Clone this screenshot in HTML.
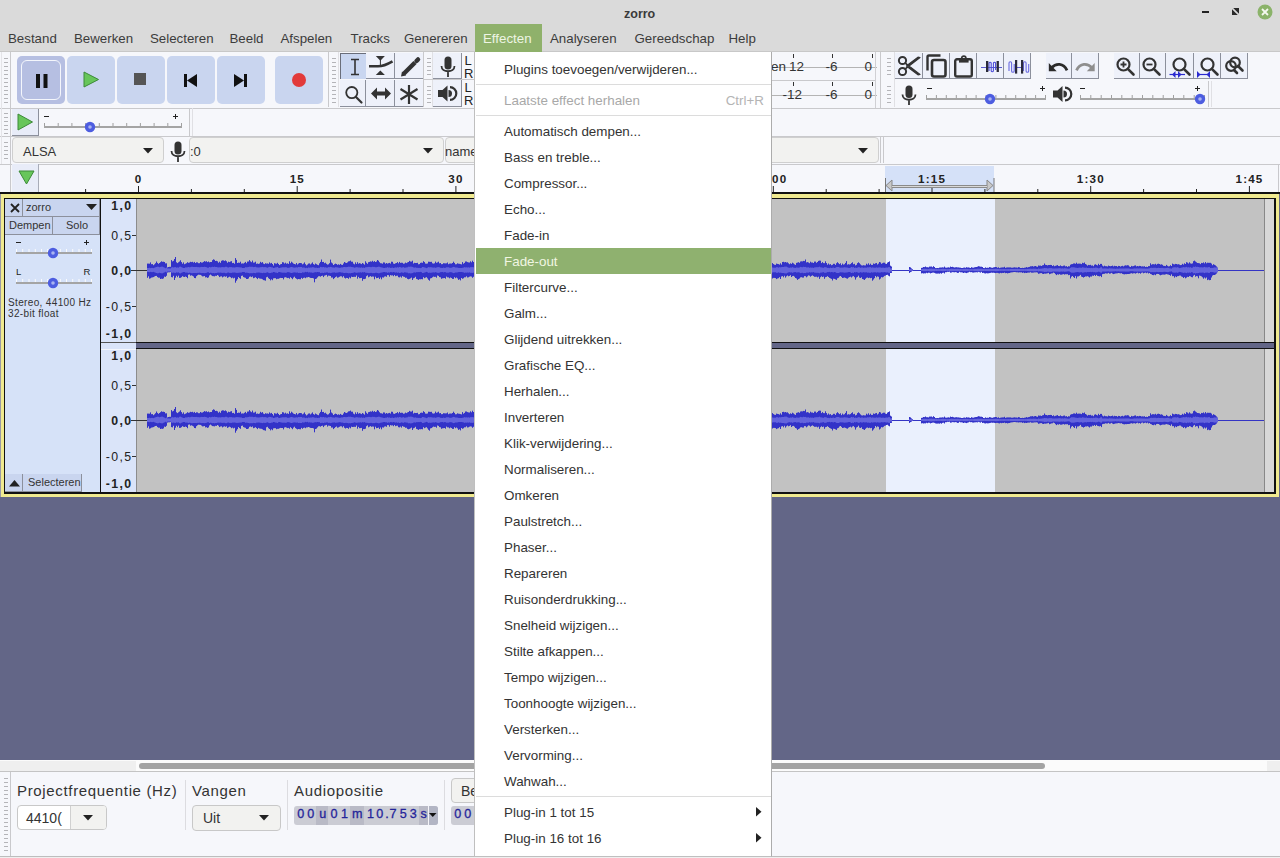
<!DOCTYPE html><html><head><meta charset="utf-8"><style>
*{margin:0;padding:0;box-sizing:border-box}
html,body{width:1280px;height:858px;overflow:hidden;background:#f6f7fb;font-family:"Liberation Sans",sans-serif;color:#3c3c3c}
.a{position:absolute}
.t{position:absolute;white-space:nowrap;line-height:1}
svg{position:absolute;overflow:visible}
</style></head><body><div class="a" style="left:0px;top:0px;width:1280px;height:52px;background:#dadada"></div>
<div class="a" style="left:0px;top:51px;width:1280px;height:1px;background:#c8c8c8"></div>
<div class="t" style="left:624px;top:8px;font-size:12.5px;font-weight:bold;color:#3a3a3a">zorro</div>
<div class="a" style="left:1202px;top:11px;width:7px;height:2px;background:#222"></div>
<svg style="left:1232px;top:8px" width="8" height="8"><path d="M1.2 0 H7 V5.8Z M0 1.2 V7 H5.8Z" fill="#2a2a2a"/></svg>
<svg style="left:1256px;top:3px" width="18" height="18"><circle cx="9" cy="9" r="7.5" fill="#8bb36a"/><path d="M6 6 L12 12 M12 6 L6 12" stroke="#f4f8ee" stroke-width="1.8"/></svg>
<div class="a" style="left:475px;top:24px;width:67px;height:28px;background:#8fb16b"></div>
<div class="t" style="left:8px;top:32px;font-size:13.3px;color:#3c3c3c">Bestand</div>
<div class="t" style="left:74px;top:32px;font-size:13.3px;color:#3c3c3c">Bewerken</div>
<div class="t" style="left:150px;top:32px;font-size:13.3px;color:#3c3c3c">Selecteren</div>
<div class="t" style="left:229.5px;top:32px;font-size:13.3px;color:#3c3c3c">Beeld</div>
<div class="t" style="left:280.5px;top:32px;font-size:13.3px;color:#3c3c3c">Afspelen</div>
<div class="t" style="left:350.5px;top:32px;font-size:13.3px;color:#3c3c3c">Tracks</div>
<div class="t" style="left:404px;top:32px;font-size:13.3px;color:#3c3c3c">Genereren</div>
<div class="t" style="left:483px;top:32px;font-size:13.3px;color:#eef5e4">Effecten</div>
<div class="t" style="left:550px;top:32px;font-size:13.3px;color:#3c3c3c">Analyseren</div>
<div class="t" style="left:634.5px;top:32px;font-size:13.3px;color:#3c3c3c">Gereedschap</div>
<div class="t" style="left:728.5px;top:32px;font-size:13.3px;color:#3c3c3c">Help</div>
<div class="a" style="left:0px;top:52px;width:1280px;height:141px;background:#f6f7fb"></div>
<div class="a" style="left:0px;top:108px;width:1280px;height:1px;background:#c9c9cc"></div>
<div class="a" style="left:0px;top:136px;width:1280px;height:1px;background:#c9c9cc"></div>
<div class="a" style="left:0px;top:164px;width:1280px;height:1px;background:#c9c9cc"></div>
<svg style="left:3px;top:53px" width="7" height="54"><rect x="1" y="5" width="4" height="1" fill="#b4b4b8"/><rect x="1" y="9" width="4" height="1" fill="#b4b4b8"/><rect x="1" y="13" width="4" height="1" fill="#b4b4b8"/><rect x="1" y="17" width="4" height="1" fill="#b4b4b8"/><rect x="1" y="21" width="4" height="1" fill="#b4b4b8"/><rect x="1" y="25" width="4" height="1" fill="#b4b4b8"/><rect x="1" y="29" width="4" height="1" fill="#b4b4b8"/><rect x="1" y="33" width="4" height="1" fill="#b4b4b8"/><rect x="1" y="37" width="4" height="1" fill="#b4b4b8"/><rect x="1" y="41" width="4" height="1" fill="#b4b4b8"/><rect x="1" y="45" width="4" height="1" fill="#b4b4b8"/><rect x="1" y="49" width="4" height="1" fill="#b4b4b8"/></svg>
<svg style="left:3px;top:108px" width="7" height="28"><rect x="1" y="5" width="4" height="1" fill="#b4b4b8"/><rect x="1" y="9" width="4" height="1" fill="#b4b4b8"/><rect x="1" y="13" width="4" height="1" fill="#b4b4b8"/><rect x="1" y="17" width="4" height="1" fill="#b4b4b8"/><rect x="1" y="21" width="4" height="1" fill="#b4b4b8"/><rect x="1" y="25" width="4" height="1" fill="#b4b4b8"/></svg>
<svg style="left:3px;top:137px" width="7" height="26"><rect x="1" y="5" width="4" height="1" fill="#b4b4b8"/><rect x="1" y="9" width="4" height="1" fill="#b4b4b8"/><rect x="1" y="13" width="4" height="1" fill="#b4b4b8"/><rect x="1" y="17" width="4" height="1" fill="#b4b4b8"/><rect x="1" y="21" width="4" height="1" fill="#b4b4b8"/></svg>
<div class="a" style="left:10px;top:52px;width:1px;height:141px;background:#c9c9cc"></div>
<div class="a" style="left:1px;top:52px;width:1px;height:112px;background:#e4e4e8"></div>
<div class="a" style="left:17px;top:56px;width:48px;height:48px;background:#b6bfe2;border-radius:5px"></div>
<div class="a" style="left:21px;top:60px;width:40px;height:40px;border:1.5px solid #f4f6fc;border-radius:6px"></div>
<svg style="left:36px;top:74px" width="12" height="14"><rect x="0" y="0" width="4" height="14" fill="#111"/><rect x="7.5" y="0" width="4" height="14" fill="#111"/></svg>
<div class="a" style="left:67px;top:56px;width:48px;height:48px;background:#c9d5ef;border-radius:5px"></div>
<svg style="left:83px;top:71px" width="17" height="17"><path d="M1 1 L15.5 8.5 L1 16Z" fill="#67c65a" stroke="#3c8a38" stroke-width="1"/></svg>
<div class="a" style="left:117px;top:56px;width:48px;height:48px;background:#c9d5ef;border-radius:5px"></div>
<div class="a" style="left:134px;top:73px;width:12px;height:12px;background:#555;"></div>
<div class="a" style="left:167px;top:56px;width:48px;height:48px;background:#c9d5ef;border-radius:5px"></div>
<svg style="left:184px;top:74px" width="14" height="14"><rect x="0" y="0" width="3" height="13" fill="#111"/><path d="M3 6.5 L13 0 L13 13Z" fill="#111"/></svg>
<div class="a" style="left:217px;top:56px;width:48px;height:48px;background:#c9d5ef;border-radius:5px"></div>
<svg style="left:234px;top:74px" width="14" height="14"><path d="M0 0 L10 6.5 L0 13Z" fill="#111"/><rect x="10" y="0" width="3" height="13" fill="#111"/></svg>
<div class="a" style="left:275px;top:56px;width:48px;height:48px;background:#c9d5ef;border-radius:5px"></div>
<svg style="left:291px;top:72px" width="16" height="16"><circle cx="8" cy="8" r="7" fill="#e23a3a"/></svg>
<div class="a" style="left:328px;top:52px;width:1px;height:55px;background:#c9c9cc"></div>
<svg style="left:331px;top:53px" width="7" height="54"><rect x="1" y="5" width="4" height="1" fill="#b4b4b8"/><rect x="1" y="9" width="4" height="1" fill="#b4b4b8"/><rect x="1" y="13" width="4" height="1" fill="#b4b4b8"/><rect x="1" y="17" width="4" height="1" fill="#b4b4b8"/><rect x="1" y="21" width="4" height="1" fill="#b4b4b8"/><rect x="1" y="25" width="4" height="1" fill="#b4b4b8"/><rect x="1" y="29" width="4" height="1" fill="#b4b4b8"/><rect x="1" y="33" width="4" height="1" fill="#b4b4b8"/><rect x="1" y="37" width="4" height="1" fill="#b4b4b8"/><rect x="1" y="41" width="4" height="1" fill="#b4b4b8"/><rect x="1" y="45" width="4" height="1" fill="#b4b4b8"/><rect x="1" y="49" width="4" height="1" fill="#b4b4b8"/></svg>
<div class="a" style="left:338px;top:52px;width:1px;height:55px;background:#e0e0e4"></div>
<div class="a" style="left:340px;top:53px;width:26px;height:26px;background:#c9d6f0;border-top:1px solid #6a6e7a;border-left:1px solid #6a6e7a"></div>
<svg style="left:350px;top:58px" width="10" height="18"><path d="M1 1.5H9 M5 1.5V16.5 M1 16.5H9" stroke="#333" stroke-width="1.6" fill="none"/></svg>
<div class="a" style="left:366px;top:53px;width:29px;height:26px;background:#eef1fa;border-right:1px solid #8c909c;border-bottom:1px solid #8c909c"></div>
<svg style="left:368px;top:55px" width="26" height="22"><path d="M7.8 1 H16.9 L12.35 5.8Z M7.8 20 H16.9 L12.35 15.4Z" fill="#333"/><path d="M12.4 5 V10" stroke="#333" stroke-width="1"/><path d="M1 11.3 H10 C15 11.3 19 9.5 24.5 6.3" stroke="#333" stroke-width="2.6" fill="none"/></svg>
<div class="a" style="left:395px;top:53px;width:29px;height:26px;background:#eef1fa;border-right:1px solid #8c909c;border-bottom:1px solid #8c909c"></div>
<svg style="left:399px;top:57px" width="22" height="20"><path d="M4.5 17 L16 5.5" stroke="#333" stroke-width="4.5"/><path d="M17.5 4 L19 2.5" stroke="#333" stroke-width="4.5" stroke-linecap="round"/><path d="M2 19.5 L3 14.5 L7 18.5Z" fill="#333"/></svg>
<div class="a" style="left:340px;top:80px;width:26px;height:27px;background:#eef1fa;border-right:1px solid #8c909c;border-bottom:1px solid #8c909c"></div>
<svg style="left:344px;top:85px" width="22" height="20"><circle cx="7.8" cy="7.6" r="5.6" stroke="#333" stroke-width="1.8" fill="none"/><path d="M12 12 L17.5 17.5" stroke="#333" stroke-width="2.2" stroke-linecap="round"/></svg>
<div class="a" style="left:366px;top:80px;width:29px;height:27px;background:#eef1fa;border-right:1px solid #8c909c;border-bottom:1px solid #8c909c"></div>
<svg style="left:370px;top:86px" width="22" height="16"><path d="M1 7.5 L7 1.5 V5.5 H15 V1.5 L21 7.5 L15 13.5 V9.5 H7 V13.5Z" fill="#333"/></svg>
<div class="a" style="left:395px;top:80px;width:29px;height:27px;background:#eef1fa;border-right:1px solid #8c909c;border-bottom:1px solid #8c909c"></div>
<svg style="left:399px;top:84px" width="21" height="21"><path d="M10 1V20 M1.5 5 L18.5 15.5 M1.5 15.5 L18.5 5" stroke="#333" stroke-width="2.2"/></svg>
<div class="a" style="left:423px;top:52px;width:1px;height:55px;background:#c9c9cc"></div>
<svg style="left:426px;top:53px" width="7" height="26"><rect x="1" y="5" width="4" height="1" fill="#b4b4b8"/><rect x="1" y="9" width="4" height="1" fill="#b4b4b8"/><rect x="1" y="13" width="4" height="1" fill="#b4b4b8"/><rect x="1" y="17" width="4" height="1" fill="#b4b4b8"/><rect x="1" y="21" width="4" height="1" fill="#b4b4b8"/></svg>
<svg style="left:426px;top:81px" width="7" height="26"><rect x="1" y="5" width="4" height="1" fill="#b4b4b8"/><rect x="1" y="9" width="4" height="1" fill="#b4b4b8"/><rect x="1" y="13" width="4" height="1" fill="#b4b4b8"/><rect x="1" y="17" width="4" height="1" fill="#b4b4b8"/><rect x="1" y="21" width="4" height="1" fill="#b4b4b8"/></svg>
<div class="a" style="left:432px;top:52px;width:1px;height:55px;background:#e0e0e4"></div>
<div class="a" style="left:424px;top:79px;width:52px;height:1px;background:#c9c9cc"></div>
<div class="a" style="left:433px;top:53px;width:29px;height:26px;background:#eef1fa;border-right:1px solid #8c909c;border-bottom:1px solid #8c909c"></div>
<svg style="left:440px;top:56px" width="16" height="22"><rect x="4.5" y="0.5" width="7" height="13" rx="3.5" fill="#333"/><path d="M1.5 10 C1.5 17 14.5 17 14.5 10 M8 15.5 V21" stroke="#333" stroke-width="1.8" fill="none"/></svg>
<div class="a" style="left:433px;top:80px;width:29px;height:27px;background:#eef1fa;border-right:1px solid #8c909c;border-bottom:1px solid #8c909c"></div>
<svg style="left:437px;top:84px" width="20" height="20"><path d="M1 6 H5.5 L10.5 1.5 V17.5 L5.5 13 H1Z" fill="#333"/><path d="M11.5 6 A3.5 3.5 0 0 1 11.5 13Z" fill="#333"/><path d="M13 3.2 A6.3 6.3 0 0 1 13 15.8" stroke="#333" stroke-width="2.2" fill="none"/></svg>
<div class="t" style="left:464.5px;top:53.5px;font-size:13px;color:#222">L</div>
<div class="t" style="left:464px;top:67px;font-size:13px;color:#222">R</div>
<div class="t" style="left:464.5px;top:80.5px;font-size:13px;color:#222">L</div>
<div class="t" style="left:464px;top:94px;font-size:13px;color:#222">R</div>
<div class="a" style="left:771px;top:67px;width:106px;height:1px;background:#b4b4b4"></div>
<div class="a" style="left:771px;top:95px;width:106px;height:1px;background:#b4b4b4"></div>
<div class="a" style="left:771px;top:80px;width:105px;height:1px;background:#c9c9cc"></div>
<div class="t" style="left:771px;top:60px;font-size:13.5px;color:#333">en</div>
<div class="t" style="left:789px;top:60px;font-size:13.5px;color:#333">12</div>
<div class="t" style="left:825.5px;top:60px;font-size:13.5px;color:#333">-6</div>
<div class="t" style="left:864.5px;top:60px;font-size:13.5px;color:#333">0</div>
<div class="t" style="left:782.5px;top:88px;font-size:13.5px;color:#333">-12</div>
<div class="t" style="left:825.5px;top:88px;font-size:13.5px;color:#333">-6</div>
<div class="t" style="left:864.5px;top:88px;font-size:13.5px;color:#333">0</div>
<div class="a" style="left:793px;top:54px;width:1px;height:4px;background:#333"></div>
<div class="a" style="left:793px;top:82px;width:1px;height:4px;background:#333"></div>
<div class="a" style="left:832px;top:54px;width:1px;height:4px;background:#333"></div>
<div class="a" style="left:832px;top:82px;width:1px;height:4px;background:#333"></div>
<div class="a" style="left:872px;top:54px;width:1px;height:4px;background:#333"></div>
<div class="a" style="left:872px;top:82px;width:1px;height:4px;background:#333"></div>
<div class="a" style="left:875px;top:52px;width:1px;height:56px;background:#d0d0d4"></div>
<div class="a" style="left:880px;top:52px;width:1px;height:56px;background:#c9c9cc"></div>
<svg style="left:886px;top:53px" width="7" height="26"><rect x="1" y="5" width="4" height="1" fill="#b4b4b8"/><rect x="1" y="9" width="4" height="1" fill="#b4b4b8"/><rect x="1" y="13" width="4" height="1" fill="#b4b4b8"/><rect x="1" y="17" width="4" height="1" fill="#b4b4b8"/><rect x="1" y="21" width="4" height="1" fill="#b4b4b8"/></svg>
<svg style="left:886px;top:81px" width="7" height="26"><rect x="1" y="5" width="4" height="1" fill="#b4b4b8"/><rect x="1" y="9" width="4" height="1" fill="#b4b4b8"/><rect x="1" y="13" width="4" height="1" fill="#b4b4b8"/><rect x="1" y="17" width="4" height="1" fill="#b4b4b8"/><rect x="1" y="21" width="4" height="1" fill="#b4b4b8"/></svg>
<div class="a" style="left:894px;top:52px;width:1px;height:55px;background:#e0e0e4"></div>
<div class="a" style="left:895px;top:53px;width:28px;height:26px;background:#eef1fa;border-right:1px solid #8c909c;border-bottom:1px solid #8c909c"></div>
<div class="a" style="left:923px;top:53px;width:27px;height:26px;background:#eef1fa;border-right:1px solid #8c909c;border-bottom:1px solid #8c909c"></div>
<div class="a" style="left:950px;top:53px;width:27px;height:26px;background:#eef1fa;border-right:1px solid #8c909c;border-bottom:1px solid #8c909c"></div>
<div class="a" style="left:977px;top:53px;width:27px;height:26px;background:#eef1fa;border-right:1px solid #8c909c;border-bottom:1px solid #8c909c"></div>
<div class="a" style="left:1004px;top:53px;width:27px;height:26px;background:#eef1fa;border-right:1px solid #8c909c;border-bottom:1px solid #8c909c"></div>
<div class="a" style="left:1046px;top:53px;width:26px;height:26px;background:#eef1fa;border-right:1px solid #8c909c;border-bottom:1px solid #8c909c"></div>
<div class="a" style="left:1072px;top:53px;width:27px;height:26px;background:#eef1fa;border-right:1px solid #8c909c;border-bottom:1px solid #8c909c"></div>
<div class="a" style="left:1114px;top:53px;width:26px;height:26px;background:#eef1fa;border-right:1px solid #8c909c;border-bottom:1px solid #8c909c"></div>
<div class="a" style="left:1140px;top:53px;width:26px;height:26px;background:#eef1fa;border-right:1px solid #8c909c;border-bottom:1px solid #8c909c"></div>
<div class="a" style="left:1166px;top:53px;width:28px;height:26px;background:#eef1fa;border-right:1px solid #8c909c;border-bottom:1px solid #8c909c"></div>
<div class="a" style="left:1194px;top:53px;width:27px;height:26px;background:#eef1fa;border-right:1px solid #8c909c;border-bottom:1px solid #8c909c"></div>
<div class="a" style="left:1221px;top:53px;width:27px;height:26px;background:#eef1fa;border-right:1px solid #8c909c;border-bottom:1px solid #8c909c"></div>
<svg style="left:897px;top:55px" width="24" height="22"><circle cx="5.5" cy="5.5" r="3.6" stroke="#333" stroke-width="2" fill="none"/><circle cx="5.5" cy="16.5" r="3.6" stroke="#333" stroke-width="2" fill="none"/><path d="M8.2 7.8 L12 11 L23 19.5 L21 19.8 L11 12.2Z M8.2 14.2 L12 11 L23 2.5 L21 2.2 L11 9.8Z" fill="#333" stroke="#333" stroke-width="1.2" stroke-linejoin="round"/></svg>
<svg style="left:925px;top:54px" width="24" height="24"><path d="M2.5 16.5 V3 a1.5 1.5 0 0 1 1.5 -1.5 H15.5" stroke="#333" stroke-width="2.4" fill="none"/><rect x="7" y="6" width="13.5" height="16.5" rx="2" stroke="#333" stroke-width="2.6" fill="none"/></svg>
<svg style="left:953px;top:55px" width="22" height="24"><rect x="2.2" y="4.2" width="16.6" height="17.3" rx="1.8" stroke="#333" stroke-width="2.4" fill="none"/><path d="M6 4.3 H15.6 V7.6 H6Z" fill="#333"/><circle cx="10.8" cy="3.2" r="2.1" stroke="#333" stroke-width="1.7" fill="none"/></svg>
<svg style="left:980px;top:59px" width="24" height="15"><path d="M1 8.5H22" stroke="#5a5ad0" stroke-width="1"/><path d="M9 12 V4 A1.2 1.2 0 0 1 11.2 4 V12 A1.2 1.2 0 0 0 13.4 12 V4 A1.2 1.2 0 0 1 15.6 4 V11" stroke="#4d4dd8" stroke-width="1.1" fill="none"/><rect x="6" y="2" width="2.3" height="11" fill="#2a2a3a"/><rect x="16.6" y="2" width="2.3" height="11" fill="#2a2a3a"/></svg>
<svg style="left:1006px;top:58px" width="26" height="18"><path d="M10 9.5H16" stroke="#5a5ad0" stroke-width="1"/><path d="M3 13 V5 A1.3 1.3 0 0 1 5.6 5 V13 A1.3 1.3 0 0 0 8.2 13 V6" stroke="#6a6ae0" stroke-width="1.1" fill="none"/><path d="M17.5 13 V5 A1.3 1.3 0 0 1 20.1 5 V13 A1.3 1.3 0 0 0 22.7 13 V6" stroke="#6a6ae0" stroke-width="1.1" fill="none"/><rect x="9" y="2" width="2.2" height="13.6" fill="#2a2a3a"/><rect x="15" y="2" width="2.2" height="13.6" fill="#2a2a3a"/></svg>
<svg style="left:1046px;top:60px" width="24" height="14"><path d="M2.8 2.9 V11.2 H10.7Z" fill="#2a2a2a"/><path d="M5.5 7.8 C10 3 17.5 2.8 21 10.4" stroke="#2a2a2a" stroke-width="2.8" fill="none"/></svg>
<svg style="left:1072px;top:60px" width="24" height="14"><path d="M22.7 2.9 V11.2 H14.8Z" fill="#8e8e8e"/><path d="M20 7.8 C15.5 3 8 2.8 4.5 10.4" stroke="#8e8e8e" stroke-width="2.8" fill="none"/></svg>
<svg style="left:1115px;top:56px" width="22" height="22"><circle cx="8.5" cy="8.5" r="6" stroke="#333" stroke-width="2.2" fill="none"/><path d="M12.8 12.8 L18.5 18.5" stroke="#333" stroke-width="2.6" stroke-linecap="round"/><path d="M5.5 8.5H11.5 M8.5 5.5V11.5" stroke="#333" stroke-width="1.8"/></svg>
<svg style="left:1141px;top:56px" width="22" height="22"><circle cx="8.5" cy="8.5" r="6" stroke="#333" stroke-width="2.2" fill="none"/><path d="M12.8 12.8 L18.5 18.5" stroke="#333" stroke-width="2.6" stroke-linecap="round"/><path d="M5.5 8.5H11.5" stroke="#333" stroke-width="1.8"/></svg>
<svg style="left:1171px;top:56px" width="22" height="22"><circle cx="8.5" cy="8.5" r="6" stroke="#333" stroke-width="2.2" fill="none"/><path d="M12.8 12.8 L18.5 18.5" stroke="#333" stroke-width="2.6" stroke-linecap="round"/><path d="M-1.5 18.5 H14" stroke="#2a2ad0" stroke-width="1.2"/><path d="M1 18.5 L4.5 15 V22Z M10.5 18.5 L7 15 V22Z" fill="#2a2ad0"/></svg>
<svg style="left:1199px;top:56px" width="22" height="22"><circle cx="8.5" cy="8.5" r="6" stroke="#333" stroke-width="2.2" fill="none"/><path d="M12.8 12.8 L18.5 18.5" stroke="#333" stroke-width="2.6" stroke-linecap="round"/><path d="M-2 18.5 H11" stroke="#2a2ad0" stroke-width="1.2"/><path d="M1.5 18.5 L-2 15 V22Z M7.5 18.5 L11 15 V22Z" fill="#2a2ad0"/></svg>
<svg style="left:1224px;top:56px" width="22" height="22"><circle cx="7" cy="10" r="4.8" stroke="#333" stroke-width="2.2" fill="none"/><circle cx="11" cy="6.5" r="4.8" stroke="#333" stroke-width="2.2" fill="none"/><path d="M14 10 L18.5 14.5 M10 14 L13 17" stroke="#333" stroke-width="2.6" stroke-linecap="round"/></svg>
<svg style="left:901px;top:85px" width="16" height="21"><rect x="4.5" y="0.5" width="7" height="12.5" rx="3.5" fill="#333"/><path d="M1.5 9.5 C1.5 16.5 14.5 16.5 14.5 9.5 M8 15 V20" stroke="#333" stroke-width="1.8" fill="none"/></svg>
<div class="a" style="left:926px;top:98px;width:120px;height:2px;background:#a4a4a4"></div>
<svg style="left:926px;top:95px" width="120" height="3"><rect x="0.0" y="0" width="1" height="3" fill="#a0a0a0"/><rect x="9.9" y="0" width="1" height="3" fill="#a0a0a0"/><rect x="19.8" y="0" width="1" height="3" fill="#a0a0a0"/><rect x="29.8" y="0" width="1" height="3" fill="#a0a0a0"/><rect x="39.7" y="0" width="1" height="3" fill="#a0a0a0"/><rect x="49.6" y="0" width="1" height="3" fill="#a0a0a0"/><rect x="59.5" y="0" width="1" height="3" fill="#a0a0a0"/><rect x="69.4" y="0" width="1" height="3" fill="#a0a0a0"/><rect x="79.3" y="0" width="1" height="3" fill="#a0a0a0"/><rect x="89.2" y="0" width="1" height="3" fill="#a0a0a0"/><rect x="99.2" y="0" width="1" height="3" fill="#a0a0a0"/><rect x="109.1" y="0" width="1" height="3" fill="#a0a0a0"/><rect x="119.0" y="0" width="1" height="3" fill="#a0a0a0"/></svg>
<svg style="left:984px;top:93px" width="12" height="12"><circle cx="6" cy="6" r="5.2" fill="#4d5de0"/><circle cx="6" cy="6" r="1.8" fill="#aab4f0"/></svg>
<div class="a" style="left:927px;top:88px;width:5px;height:1px;background:#222"></div>
<div class="a" style="left:1040px;top:88px;width:5px;height:1px;background:#222"></div>
<div class="a" style="left:1042px;top:86px;width:1px;height:5px;background:#222"></div>
<svg style="left:1052px;top:85px" width="20" height="19"><path d="M1 5.5 H5.5 L10.5 1 V17 L5.5 12.5 H1Z" fill="#333"/><path d="M11.5 5.5 A3.5 3.5 0 0 1 11.5 12.5Z" fill="#333"/><path d="M13 2.7 A6.3 6.3 0 0 1 13 15.3" stroke="#333" stroke-width="2.2" fill="none"/></svg>
<div class="a" style="left:1080px;top:98px;width:125px;height:2px;background:#a4a4a4"></div>
<svg style="left:1080px;top:95px" width="125" height="3"><rect x="0.0" y="0" width="1" height="3" fill="#a0a0a0"/><rect x="10.3" y="0" width="1" height="3" fill="#a0a0a0"/><rect x="20.7" y="0" width="1" height="3" fill="#a0a0a0"/><rect x="31.0" y="0" width="1" height="3" fill="#a0a0a0"/><rect x="41.3" y="0" width="1" height="3" fill="#a0a0a0"/><rect x="51.7" y="0" width="1" height="3" fill="#a0a0a0"/><rect x="62.0" y="0" width="1" height="3" fill="#a0a0a0"/><rect x="72.3" y="0" width="1" height="3" fill="#a0a0a0"/><rect x="82.7" y="0" width="1" height="3" fill="#a0a0a0"/><rect x="93.0" y="0" width="1" height="3" fill="#a0a0a0"/><rect x="103.3" y="0" width="1" height="3" fill="#a0a0a0"/><rect x="113.7" y="0" width="1" height="3" fill="#a0a0a0"/><rect x="124.0" y="0" width="1" height="3" fill="#a0a0a0"/></svg>
<svg style="left:1194px;top:93px" width="12" height="12"><circle cx="6" cy="6" r="5.2" fill="#4d5de0"/><circle cx="6" cy="6" r="1.8" fill="#aab4f0"/></svg>
<div class="a" style="left:1080px;top:88px;width:5px;height:1px;background:#222"></div>
<div class="a" style="left:1195px;top:88px;width:5px;height:1px;background:#222"></div>
<div class="a" style="left:1197px;top:86px;width:1px;height:5px;background:#222"></div>
<div class="a" style="left:1208px;top:81px;width:1px;height:26px;background:#c9c9cc"></div>
<div class="a" style="left:1211px;top:81px;width:1px;height:26px;background:#e0e0e4"></div>
<div class="a" style="left:12px;top:109px;width:27px;height:27px;background:#e8ecf8;border-right:1px solid #8c909c;border-bottom:1px solid #8c909c"></div>
<svg style="left:17px;top:113px" width="17" height="18"><path d="M1 1 L15.5 9 L1 17Z" fill="#67c65a" stroke="#3c8a38" stroke-width="1"/></svg>
<div class="a" style="left:44px;top:126px;width:138px;height:2px;background:#a4a4a4"></div>
<svg style="left:44px;top:123px" width="138" height="3"><rect x="0.0" y="0" width="1" height="3" fill="#a0a0a0"/><rect x="13.7" y="0" width="1" height="3" fill="#a0a0a0"/><rect x="27.4" y="0" width="1" height="3" fill="#a0a0a0"/><rect x="41.1" y="0" width="1" height="3" fill="#a0a0a0"/><rect x="54.8" y="0" width="1" height="3" fill="#a0a0a0"/><rect x="68.5" y="0" width="1" height="3" fill="#a0a0a0"/><rect x="82.2" y="0" width="1" height="3" fill="#a0a0a0"/><rect x="95.9" y="0" width="1" height="3" fill="#a0a0a0"/><rect x="109.6" y="0" width="1" height="3" fill="#a0a0a0"/><rect x="123.3" y="0" width="1" height="3" fill="#a0a0a0"/><rect x="137.0" y="0" width="1" height="3" fill="#a0a0a0"/></svg>
<svg style="left:84px;top:121px" width="12" height="12"><circle cx="6" cy="6" r="5.2" fill="#4d5de0"/><circle cx="6" cy="6" r="1.8" fill="#aab4f0"/></svg>
<div class="a" style="left:44px;top:116px;width:5px;height:1px;background:#222"></div>
<div class="a" style="left:173px;top:116px;width:5px;height:1px;background:#222"></div>
<div class="a" style="left:175px;top:114px;width:1px;height:5px;background:#222"></div>
<div class="a" style="left:189px;top:108px;width:1px;height:28px;background:#c9c9cc"></div>
<div class="a" style="left:192px;top:108px;width:1px;height:28px;background:#e0e0e4"></div>
<div class="a" style="left:12px;top:137px;width:152px;height:26px;background:#f2f2f0;border:1px solid #cfcfcf;border-radius:4px"></div>
<div class="t" style="left:23px;top:145px;font-size:13px;color:#333">ALSA</div>
<svg style="left:143px;top:148px" width="10" height="6"><path d="M0 0H10L5 5.5Z" fill="#222"/></svg>
<svg style="left:170px;top:141px" width="16" height="22"><rect x="4.5" y="0.5" width="7" height="13" rx="3.5" fill="#333"/><path d="M1.5 10 C1.5 17 14.5 17 14.5 10 M8 15.5 V21" stroke="#333" stroke-width="1.8" fill="none"/></svg>
<div class="a" style="left:189px;top:137px;width:255px;height:26px;background:#f2f2f0;border:1px solid #cfcfcf;border-radius:4px"></div>
<div class="t" style="left:190px;top:145px;font-size:13px;color:#333">:0</div>
<svg style="left:423px;top:148px" width="10" height="6"><path d="M0 0H10L5 5.5Z" fill="#222"/></svg>
<div class="a" style="left:445px;top:137px;width:434px;height:26px;background:#f2f2f0;border:1px solid #cfcfcf;border-radius:4px"></div>
<div class="t" style="left:445px;top:145px;font-size:13px;color:#333">name</div>
<svg style="left:858px;top:148px" width="10" height="6"><path d="M0 0H10L5 5.5Z" fill="#222"/></svg>
<div class="a" style="left:880px;top:137px;width:1px;height:26px;background:#c9c9cc"></div>
<div class="a" style="left:883px;top:137px;width:1px;height:26px;background:#c9c9cc"></div>
<div class="a" style="left:12px;top:164px;width:27px;height:28px;background:#e8ecf8;border-right:1px solid #a8acb8"></div>
<svg style="left:18px;top:170px" width="17" height="15"><path d="M1 1 H16 L8.5 14Z" fill="#67c65a" stroke="#3c8a38" stroke-width="1"/></svg>
<div class="a" style="left:885px;top:166px;width:109px;height:26px;background:#d5e1f8"></div>
<div class="a" style="left:1278px;top:164px;width:1px;height:28px;background:#c8c8cc"></div>
<svg style="left:39px;top:164px" width="1240" height="28"><rect x="46.10" y="25" width="1" height="3" fill="#222"/><rect x="99.00" y="22" width="1" height="6" fill="#222"/><rect x="151.90" y="25" width="1" height="3" fill="#222"/><rect x="204.80" y="25" width="1" height="3" fill="#222"/><rect x="257.70" y="22" width="1" height="6" fill="#222"/><rect x="310.60" y="25" width="1" height="3" fill="#222"/><rect x="363.50" y="25" width="1" height="3" fill="#222"/><rect x="416.40" y="22" width="1" height="6" fill="#222"/><rect x="469.30" y="25" width="1" height="3" fill="#222"/><rect x="522.20" y="25" width="1" height="3" fill="#222"/><rect x="575.10" y="22" width="1" height="6" fill="#222"/><rect x="628.00" y="25" width="1" height="3" fill="#222"/><rect x="680.90" y="25" width="1" height="3" fill="#222"/><rect x="733.80" y="22" width="1" height="6" fill="#222"/><rect x="786.70" y="25" width="1" height="3" fill="#222"/><rect x="839.60" y="25" width="1" height="3" fill="#222"/><rect x="892.50" y="22" width="1" height="6" fill="#222"/><rect x="945.40" y="25" width="1" height="3" fill="#222"/><rect x="998.30" y="25" width="1" height="3" fill="#222"/><rect x="1051.20" y="22" width="1" height="6" fill="#222"/><rect x="1104.10" y="25" width="1" height="3" fill="#222"/><rect x="1157.00" y="25" width="1" height="3" fill="#222"/><rect x="1209.90" y="22" width="1" height="6" fill="#222"/></svg>
<div class="t" style="left:98.6px;top:173.3px;width:80px;text-align:center;font-size:11.6px;letter-spacing:1.2px;font-weight:bold;color:#222">0</div>
<div class="t" style="left:257.3px;top:173.3px;width:80px;text-align:center;font-size:11.6px;letter-spacing:1.2px;font-weight:bold;color:#222">15</div>
<div class="t" style="left:416.0px;top:173.3px;width:80px;text-align:center;font-size:11.6px;letter-spacing:1.2px;font-weight:bold;color:#222">30</div>
<div class="t" style="left:574.7px;top:173.3px;width:80px;text-align:center;font-size:11.6px;letter-spacing:1.2px;font-weight:bold;color:#222">45</div>
<div class="t" style="left:733.4px;top:173.3px;width:80px;text-align:center;font-size:11.6px;letter-spacing:1.2px;font-weight:bold;color:#222">1:00</div>
<div class="t" style="left:892.1px;top:173.3px;width:80px;text-align:center;font-size:11.6px;letter-spacing:1.2px;font-weight:bold;color:#222">1:15</div>
<div class="t" style="left:1050.8px;top:173.3px;width:80px;text-align:center;font-size:11.6px;letter-spacing:1.2px;font-weight:bold;color:#222">1:30</div>
<div class="t" style="left:1209.5px;top:173.3px;width:80px;text-align:center;font-size:11.6px;letter-spacing:1.2px;font-weight:bold;color:#222">1:45</div>
<svg style="left:884px;top:178px" width="12" height="15"><rect x="1" y="0" width="1" height="14" fill="#777"/><path d="M2 7.5 L8 2 V13Z" fill="#c8c8c8" stroke="#888" stroke-width="1"/></svg>
<svg style="left:985px;top:178px" width="12" height="15"><rect x="8.5" y="0" width="1" height="14" fill="#777"/><path d="M8 7.5 L2 2 V13Z" fill="#c8c8c8" stroke="#888" stroke-width="1"/></svg>
<div class="a" style="left:892px;top:185px;width:95px;height:3px;background:#d8d8d8;border-top:1px solid #8a8a8a;border-bottom:1px solid #8a8a8a"></div>
<div class="a" style="left:0px;top:192px;width:1280px;height:568px;background:#636687"></div>
<div class="a" style="left:0px;top:192px;width:1280px;height:2px;background:#111"></div>
<div class="a" style="left:0px;top:194px;width:2px;height:303px;background:#9a9aa8"></div>
<div class="a" style="left:1px;top:194px;width:1278px;height:303px;background:#f0ea90"></div>
<div class="a" style="left:4px;top:198px;width:1272px;height:296px;background:#111"></div>
<div class="a" style="left:5px;top:199px;width:1269px;height:293px;background:#d8d8d8"></div>
<div class="a" style="left:5px;top:199px;width:95px;height:293px;background:#d6e2f8"></div>
<div class="a" style="left:100px;top:199px;width:1px;height:293px;background:#111"></div>
<div class="a" style="left:5px;top:199px;width:18px;height:18px;background:#c9d5ef;border-right:1px solid #8c909c;border-bottom:1px solid #8c909c"></div>
<svg style="left:10px;top:203px" width="10" height="10"><path d="M1 1 L9 9 M9 1 L1 9" stroke="#222" stroke-width="1.8"/></svg>
<div class="a" style="left:23px;top:199px;width:77px;height:18px;background:#c9d5ef;border-right:1px solid #8c909c;border-bottom:1px solid #8c909c"></div>
<div class="t" style="left:26px;top:202px;font-size:11px;color:#333">zorro</div>
<svg style="left:86px;top:204px" width="12" height="8"><path d="M0 0H11L5.5 6Z" fill="#222"/></svg>
<div class="a" style="left:5px;top:217px;width:48px;height:18px;background:#c9d5ef;border-right:1px solid #8c909c;border-bottom:1px solid #8c909c"></div>
<div class="a" style="left:53px;top:217px;width:47px;height:18px;background:#c9d5ef;border-right:1px solid #8c909c;border-bottom:1px solid #8c909c"></div>
<div class="t" style="left:9px;top:220px;font-size:11px;color:#333">Dempen</div>
<div class="t" style="left:66px;top:220px;font-size:11px;color:#333">Solo</div>
<div class="a" style="left:5px;top:234px;width:95px;height:1px;background:#8c909c"></div>
<div class="a" style="left:16px;top:252px;width:76px;height:2px;background:#a4a4a4"></div>
<svg style="left:16px;top:249px" width="76" height="3"><rect x="0.0" y="0" width="1" height="3" fill="#fbfbfb"/><rect x="6.2" y="0" width="1" height="3" fill="#fbfbfb"/><rect x="12.5" y="0" width="1" height="3" fill="#fbfbfb"/><rect x="18.8" y="0" width="1" height="3" fill="#fbfbfb"/><rect x="25.0" y="0" width="1" height="3" fill="#fbfbfb"/><rect x="31.2" y="0" width="1" height="3" fill="#fbfbfb"/><rect x="37.5" y="0" width="1" height="3" fill="#fbfbfb"/><rect x="43.8" y="0" width="1" height="3" fill="#fbfbfb"/><rect x="50.0" y="0" width="1" height="3" fill="#fbfbfb"/><rect x="56.2" y="0" width="1" height="3" fill="#fbfbfb"/><rect x="62.5" y="0" width="1" height="3" fill="#fbfbfb"/><rect x="68.8" y="0" width="1" height="3" fill="#fbfbfb"/><rect x="75.0" y="0" width="1" height="3" fill="#fbfbfb"/></svg>
<svg style="left:47px;top:247px" width="12" height="12"><circle cx="6" cy="6" r="5.2" fill="#4d5de0"/><circle cx="6" cy="6" r="1.8" fill="#aab4f0"/></svg>
<div class="a" style="left:16px;top:242px;width:5px;height:1px;background:#222"></div>
<div class="a" style="left:84px;top:242px;width:5px;height:1px;background:#222"></div>
<div class="a" style="left:86px;top:240px;width:1px;height:5px;background:#222"></div>
<div class="t" style="left:16px;top:267px;font-size:9.5px;color:#222">L</div>
<div class="t" style="left:83.5px;top:267px;font-size:9.5px;color:#222">R</div>
<div class="a" style="left:16px;top:282px;width:76px;height:2px;background:#a4a4a4"></div>
<svg style="left:16px;top:279px" width="76" height="3"><rect x="0.0" y="0" width="1" height="3" fill="#fbfbfb"/><rect x="6.2" y="0" width="1" height="3" fill="#fbfbfb"/><rect x="12.5" y="0" width="1" height="3" fill="#fbfbfb"/><rect x="18.8" y="0" width="1" height="3" fill="#fbfbfb"/><rect x="25.0" y="0" width="1" height="3" fill="#fbfbfb"/><rect x="31.2" y="0" width="1" height="3" fill="#fbfbfb"/><rect x="37.5" y="0" width="1" height="3" fill="#fbfbfb"/><rect x="43.8" y="0" width="1" height="3" fill="#fbfbfb"/><rect x="50.0" y="0" width="1" height="3" fill="#fbfbfb"/><rect x="56.2" y="0" width="1" height="3" fill="#fbfbfb"/><rect x="62.5" y="0" width="1" height="3" fill="#fbfbfb"/><rect x="68.8" y="0" width="1" height="3" fill="#fbfbfb"/><rect x="75.0" y="0" width="1" height="3" fill="#fbfbfb"/></svg>
<svg style="left:47px;top:277px" width="12" height="12"><circle cx="6" cy="6" r="5.2" fill="#4d5de0"/><circle cx="6" cy="6" r="1.8" fill="#aab4f0"/></svg>
<div class="t" style="left:8px;top:297.5px;font-size:10px;color:#333;letter-spacing:0.35px">Stereo, 44100 Hz</div>
<div class="t" style="left:8px;top:308.6px;font-size:10px;color:#333;letter-spacing:0.35px">32-bit float</div>
<div class="a" style="left:5px;top:474px;width:18px;height:18px;background:#c9d5ef;border-right:1px solid #8c909c;border-bottom:1px solid #8c909c"></div>
<svg style="left:9px;top:479px" width="12" height="9"><path d="M0 7.5H11L5.5 1Z" fill="#222"/></svg>
<div class="a" style="left:23px;top:474px;width:59px;height:18px;background:#c9d5ef;border-right:1px solid #8c909c;border-bottom:1px solid #8c909c"></div>
<div class="t" style="left:28px;top:477px;font-size:11px;color:#333">Selecteren</div>
<div class="a" style="left:101px;top:199px;width:35px;height:144px;background:#dae4f9"></div>
<div class="a" style="left:101px;top:343px;width:35px;height:6px;background:#dae4f9"></div>
<div class="a" style="left:101px;top:342px;width:35px;height:1px;background:#555"></div>
<div class="a" style="left:101px;top:349px;width:35px;height:1px;background:#f4f6fc"></div>
<div class="a" style="left:101px;top:350px;width:35px;height:142px;background:#dae4f9"></div>
<div class="t" style="left:95px;top:200.3px;width:37.5px;text-align:right;font-size:12.3px;letter-spacing:1.4px;font-weight:bold;color:#222">1,0</div>
<div class="t" style="left:95px;top:229.7px;width:37.5px;text-align:right;font-size:12.3px;letter-spacing:1.4px;font-weight:normal;color:#222">0,5</div>
<div class="a" style="left:132px;top:235px;width:4px;height:1px;background:#333"></div>
<div class="t" style="left:95px;top:264.9px;width:37.5px;text-align:right;font-size:12.3px;letter-spacing:1.4px;font-weight:bold;color:#222">0,0</div>
<div class="t" style="left:95px;top:300.5px;width:37.5px;text-align:right;font-size:12.3px;letter-spacing:1.4px;font-weight:normal;color:#222">-0,5</div>
<div class="a" style="left:132px;top:306px;width:4px;height:1px;background:#333"></div>
<div class="t" style="left:95px;top:327.7px;width:37.5px;text-align:right;font-size:12.3px;letter-spacing:1.4px;font-weight:bold;color:#222">-1,0</div>
<div class="t" style="left:95px;top:350.3px;width:37.5px;text-align:right;font-size:12.3px;letter-spacing:1.4px;font-weight:bold;color:#222">1,0</div>
<div class="t" style="left:95px;top:379.7px;width:37.5px;text-align:right;font-size:12.3px;letter-spacing:1.4px;font-weight:normal;color:#222">0,5</div>
<div class="a" style="left:132px;top:385px;width:4px;height:1px;background:#333"></div>
<div class="t" style="left:95px;top:414.9px;width:37.5px;text-align:right;font-size:12.3px;letter-spacing:1.4px;font-weight:bold;color:#222">0,0</div>
<div class="t" style="left:95px;top:450.5px;width:37.5px;text-align:right;font-size:12.3px;letter-spacing:1.4px;font-weight:normal;color:#222">-0,5</div>
<div class="a" style="left:132px;top:456px;width:4px;height:1px;background:#333"></div>
<div class="t" style="left:95px;top:477.7px;width:37.5px;text-align:right;font-size:12.3px;letter-spacing:1.4px;font-weight:bold;color:#222">-1,0</div>
<div class="a" style="left:136px;top:199px;width:1128px;height:143px;background:#c2c2c2"></div>
<div class="a" style="left:136px;top:349px;width:1128px;height:143px;background:#c2c2c2"></div>
<div class="a" style="left:886px;top:199px;width:109px;height:143px;background:#eaf0fd"></div>
<div class="a" style="left:886px;top:349px;width:109px;height:143px;background:#eaf0fd"></div>
<div class="a" style="left:136px;top:342px;width:1138px;height:1px;background:#111"></div>
<div class="a" style="left:136px;top:343px;width:1138px;height:5px;background:#636687"></div>
<div class="a" style="left:136px;top:348px;width:1138px;height:1px;background:#111"></div>
<div class="a" style="left:1264px;top:199px;width:1px;height:143px;background:#888"></div>
<div class="a" style="left:1264px;top:349px;width:1px;height:143px;background:#888"></div>
<div class="a" style="left:136px;top:199px;width:1px;height:143px;background:#8c8c8c"></div>
<div class="a" style="left:136px;top:349px;width:1px;height:143px;background:#8c8c8c"></div>
<svg style="left:0;top:0" width="1280" height="858"><path d="M131 270.5H147" stroke="#333" stroke-width="1"/><path d="M147 270.5H1264" stroke="#3434c4" stroke-width="1"/><path d="M147.5 263.6V277.8M148.5 263.6V276.3M149.5 263.7V278.7M150.5 262.4V278.3M151.5 264.2V277.6M152.5 264.1V277.4M153.5 265.2V277.1M154.5 264.3V276.5M155.5 263.2V276.0M156.5 261.5V275.9M157.5 262.9V277.1M158.5 263.8V277.7M159.5 263.0V277.7M160.5 262.2V279.0M161.5 261.3V278.7M162.5 261.8V278.9M163.5 261.7V278.4M164.5 262.0V276.6M165.5 263.4V276.9M166.5 263.3V275.8M167.5 267.4V272.6M168.5 267.0V272.3M169.5 266.8V272.3M170.5 266.8V272.1M171.5 260.1V277.1M172.5 261.4V277.4M173.5 260.8V275.8M174.5 259.0V280.0M175.5 257.0V277.7M176.5 262.3V275.8M177.5 263.1V277.2M178.5 262.3V275.7M179.5 261.5V277.9M180.5 260.3V277.8M181.5 262.1V277.2M182.5 263.7V276.2M183.5 262.4V276.8M184.5 264.2V277.0M185.5 263.7V276.5M186.5 263.2V277.0M187.5 262.2V278.2M188.5 262.8V274.7M189.5 262.5V274.5M190.5 261.8V275.7M191.5 262.1V275.3M192.5 261.8V275.8M193.5 262.6V276.5M194.5 261.9V278.0M195.5 263.0V278.2M196.5 262.3V276.2M197.5 262.4V275.3M198.5 263.2V274.7M199.5 263.2V274.8M200.5 262.0V274.9M201.5 262.6V275.6M202.5 262.5V276.4M203.5 261.9V276.3M204.5 261.1V276.0M205.5 261.6V277.4M206.5 261.2V277.2M207.5 262.1V277.9M208.5 261.5V277.4M209.5 262.3V275.4M210.5 262.0V274.6M211.5 262.0V275.4M212.5 260.2V276.1M213.5 259.3V276.2M214.5 259.8V276.4M215.5 261.0V275.8M216.5 260.8V275.9M217.5 261.3V275.0M218.5 262.7V275.7M219.5 261.7V277.1M220.5 262.8V276.5M221.5 260.8V276.3M222.5 260.3V277.4M223.5 260.4V276.7M224.5 260.9V276.3M225.5 260.4V276.8M226.5 261.2V276.3M227.5 262.7V277.9M228.5 261.7V277.3M229.5 262.1V276.7M230.5 261.5V277.2M231.5 261.2V278.2M232.5 263.1V277.6M233.5 262.9V278.4M234.5 263.7V277.8M235.5 258.1V282.7M236.5 259.9V280.7M237.5 263.0V279.2M238.5 262.6V277.1M239.5 262.8V278.1M240.5 261.7V278.8M241.5 263.6V275.9M242.5 263.4V275.6M243.5 263.5V277.1M244.5 262.8V277.5M245.5 261.9V277.8M246.5 263.2V279.0M247.5 261.6V279.0M248.5 261.5V278.5M249.5 260.1V276.8M250.5 261.4V276.5M251.5 262.2V277.1M252.5 260.6V276.5M253.5 262.6V278.2M254.5 262.5V277.8M255.5 261.7V277.2M256.5 263.8V278.1M257.5 263.5V279.1M258.5 263.9V277.9M259.5 263.5V278.5M260.5 261.8V278.7M261.5 262.7V278.8M262.5 262.1V279.3M263.5 263.6V280.1M264.5 264.1V280.3M265.5 263.2V280.7M266.5 263.6V277.3M267.5 263.4V276.8M268.5 263.8V278.2M269.5 262.4V279.0M270.5 263.4V280.4M271.5 262.9V279.3M272.5 264.0V280.2M273.5 265.5V278.4M274.5 263.2V278.2M275.5 263.5V278.2M276.5 263.7V279.2M277.5 262.8V278.8M278.5 264.0V278.8M279.5 265.1V278.3M280.5 264.3V277.9M281.5 264.0V278.0M282.5 262.2V278.0M283.5 262.4V279.4M284.5 263.5V277.5M285.5 262.7V277.2M286.5 263.7V277.6M287.5 263.3V278.1M288.5 263.9V277.9M289.5 261.3V278.7M290.5 263.2V277.2M291.5 261.7V278.1M292.5 262.6V279.2M293.5 263.6V277.6M294.5 264.0V276.7M295.5 264.4V278.1M296.5 263.0V278.8M297.5 264.5V279.4M298.5 263.6V279.0M299.5 263.0V279.2M300.5 263.0V279.3M301.5 263.2V277.9M302.5 264.3V278.8M303.5 263.6V277.9M304.5 262.4V277.6M305.5 264.2V278.2M306.5 265.4V277.4M307.5 264.6V277.4M308.5 263.6V277.0M309.5 263.4V277.4M310.5 264.4V277.9M311.5 263.5V278.0M312.5 262.4V278.0M313.5 264.1V278.4M314.5 264.7V282.3M315.5 263.5V279.0M316.5 264.2V278.6M317.5 264.8V277.4M318.5 265.2V276.3M319.5 263.3V276.2M320.5 261.9V276.7M321.5 259.5V276.0M322.5 262.0V275.7M323.5 261.9V277.1M324.5 263.2V275.7M325.5 262.7V275.3M326.5 263.8V274.9M327.5 264.6V276.6M328.5 264.3V275.6M329.5 263.2V275.8M330.5 259.6V276.0M331.5 262.5V277.6M332.5 263.4V277.5M333.5 265.0V279.1M334.5 264.2V278.1M335.5 263.6V277.1M336.5 264.0V276.5M337.5 264.8V277.7M338.5 264.3V277.4M339.5 264.8V276.8M340.5 263.9V276.3M341.5 264.7V276.3M342.5 264.9V277.4M343.5 263.5V276.2M344.5 262.0V277.8M345.5 262.7V278.5M346.5 263.0V277.9M347.5 262.4V278.0M348.5 261.4V278.8M349.5 261.2V277.4M350.5 260.6V278.3M351.5 261.7V276.7M352.5 261.7V277.0M353.5 263.6V276.9M354.5 264.3V276.8M355.5 262.4V276.9M356.5 263.9V275.5M357.5 262.2V278.7M358.5 263.7V276.9M359.5 263.1V278.2M360.5 263.5V278.1M361.5 264.1V277.9M362.5 263.0V280.8M363.5 263.7V279.1M364.5 264.6V279.1M365.5 261.3V278.7M366.5 262.8V276.2M367.5 263.8V275.4M368.5 262.2V277.3M369.5 261.9V276.7M370.5 261.4V276.1M371.5 261.7V276.8M372.5 260.8V276.5M373.5 261.8V276.6M374.5 261.1V279.3M375.5 262.0V276.7M376.5 261.5V278.2M377.5 260.0V278.0M378.5 260.7V277.6M379.5 262.2V279.0M380.5 263.2V277.5M381.5 263.3V279.3M382.5 263.7V277.4M383.5 262.4V277.6M384.5 262.5V276.6M385.5 263.7V276.3M386.5 263.0V276.8M387.5 263.6V275.1M388.5 263.2V275.2M389.5 262.9V276.7M390.5 263.6V275.1M391.5 261.7V275.5M392.5 261.8V275.3M393.5 263.6V276.2M394.5 263.9V275.0M395.5 263.3V276.2M396.5 263.0V275.8M397.5 262.1V275.7M398.5 263.3V277.2M399.5 261.9V277.4M400.5 262.9V276.6M401.5 262.7V277.6M402.5 262.8V276.1M403.5 263.7V276.7M404.5 263.5V276.9M405.5 262.6V277.8M406.5 263.1V277.7M407.5 262.4V278.9M408.5 262.0V279.3M409.5 260.9V278.9M410.5 261.5V278.4M411.5 261.6V277.6M412.5 260.7V280.0M413.5 263.5V278.3M414.5 262.8V277.8M415.5 263.0V276.8M416.5 263.0V278.9M417.5 262.8V279.3M418.5 264.3V279.9M419.5 264.1V279.2M420.5 262.9V279.3M421.5 262.6V279.1M422.5 262.8V279.3M423.5 261.2V277.2M424.5 262.1V278.2M425.5 263.6V277.6M426.5 263.7V277.2M427.5 263.5V278.4M428.5 261.7V279.8M429.5 261.8V280.7M430.5 261.9V278.4M431.5 261.8V278.1M432.5 263.3V277.3M433.5 263.6V276.6M434.5 263.3V276.9M435.5 261.6V276.8M436.5 262.8V277.7M437.5 262.4V275.5M438.5 261.7V275.9M439.5 263.3V277.1M440.5 263.0V277.3M441.5 264.2V278.8M442.5 264.1V278.3M443.5 263.2V278.2M444.5 263.3V278.0M445.5 263.4V278.7M446.5 263.3V276.6M447.5 262.5V277.4M448.5 264.2V277.4M449.5 263.6V278.3M450.5 263.5V277.5M451.5 263.6V278.0M452.5 263.0V278.9M453.5 261.7V278.9M454.5 262.9V277.2M455.5 264.3V278.2M456.5 264.2V277.5M457.5 263.3V278.4M458.5 263.7V279.9M459.5 263.8V279.3M460.5 264.1V280.4M461.5 264.4V278.0M462.5 262.1V278.8M463.5 263.7V278.3M464.5 262.9V277.3M465.5 261.5V277.3M466.5 261.5V276.3M467.5 262.1V277.5M468.5 262.4V277.3M469.5 262.5V276.7M470.5 261.3V276.4M471.5 262.3V276.6M472.5 260.7V277.8M473.5 262.0V276.8M474.5 261.4V276.7M475.5 261.7V278.3M476.5 260.7V277.6M477.5 260.6V278.1M478.5 260.1V278.7M479.5 260.0V278.1M480.5 256.9V277.5M481.5 259.7V278.1M482.5 260.3V278.0M483.5 261.5V277.6M484.5 261.1V276.2M485.5 262.4V276.0M486.5 262.3V277.1M487.5 262.4V275.2M488.5 261.9V276.0M489.5 261.5V276.1M490.5 262.8V277.0M491.5 261.0V275.1M492.5 262.0V275.8M493.5 262.4V277.3M494.5 262.5V275.8M495.5 263.1V276.4M496.5 263.7V276.2M497.5 262.6V276.8M498.5 263.1V277.9M499.5 259.7V277.9M500.5 262.3V277.7M501.5 261.4V276.5M502.5 262.2V278.1M503.5 262.0V277.1M504.5 262.4V276.9M505.5 263.1V277.5M506.5 262.4V278.1M507.5 262.9V280.0M508.5 262.5V279.3M509.5 262.3V278.2M510.5 261.5V277.4M511.5 263.6V275.9M512.5 263.2V277.1M513.5 262.2V278.3M514.5 261.8V276.5M515.5 263.2V276.5M516.5 262.8V276.0M517.5 263.6V276.0M518.5 262.3V276.6M519.5 263.8V278.9M520.5 262.7V278.0M521.5 261.6V276.9M522.5 262.7V276.2M523.5 262.6V275.7M524.5 263.6V277.8M525.5 263.4V277.4M526.5 262.7V278.4M527.5 263.3V280.7M528.5 262.9V277.9M529.5 262.4V277.5M530.5 262.1V278.1M531.5 262.4V279.5M532.5 263.6V277.2M533.5 264.0V274.9M534.5 264.1V275.6M535.5 263.9V275.5M536.5 263.7V275.7M537.5 262.0V274.9M538.5 261.9V276.0M539.5 262.9V277.0M540.5 262.8V276.5M541.5 264.2V275.5M542.5 263.5V275.0M543.5 264.5V276.1M544.5 263.3V276.3M545.5 263.5V274.9M546.5 263.1V275.8M547.5 264.1V274.9M548.5 264.0V278.0M549.5 263.7V277.1M550.5 263.2V275.8M551.5 262.0V277.6M552.5 262.8V278.7M553.5 261.9V278.4M554.5 263.6V277.0M555.5 265.2V277.1M556.5 263.4V276.9M557.5 263.4V278.6M558.5 263.3V278.5M559.5 262.8V277.8M560.5 263.4V277.8M561.5 262.1V276.7M562.5 261.3V276.5M563.5 262.6V277.7M564.5 261.7V278.2M565.5 262.4V277.0M566.5 261.7V276.3M567.5 260.2V275.3M568.5 260.7V276.2M569.5 262.5V278.3M570.5 262.1V277.7M571.5 260.2V277.1M572.5 262.4V274.7M573.5 262.2V276.2M574.5 261.8V274.8M575.5 263.2V276.0M576.5 262.4V278.1M577.5 262.8V276.3M578.5 262.1V276.4M579.5 261.4V275.2M580.5 262.4V276.0M581.5 261.3V276.2M582.5 261.7V277.3M583.5 261.6V277.1M584.5 263.1V276.8M585.5 263.5V276.3M586.5 261.7V277.3M587.5 261.5V275.6M588.5 262.9V275.4M589.5 261.9V276.4M590.5 263.1V278.0M591.5 263.5V278.2M592.5 263.4V279.6M593.5 260.4V276.1M594.5 260.1V275.8M595.5 261.2V277.0M596.5 261.0V275.9M597.5 259.5V276.0M598.5 259.6V276.3M599.5 259.5V276.1M600.5 259.2V277.4M601.5 260.2V275.8M602.5 261.6V276.0M603.5 263.4V276.3M604.5 260.6V277.3M605.5 260.8V277.6M606.5 261.7V276.7M607.5 262.1V276.7M608.5 264.2V277.1M609.5 263.7V276.8M610.5 263.3V276.4M611.5 262.3V276.4M612.5 260.8V277.2M613.5 261.4V276.8M614.5 262.4V277.6M615.5 262.4V277.4M616.5 261.9V276.1M617.5 261.8V276.8M618.5 262.2V276.4M619.5 262.5V275.0M620.5 263.1V275.7M621.5 263.7V276.1M622.5 263.1V276.0M623.5 261.6V277.1M624.5 262.7V276.2M625.5 259.4V276.4M626.5 259.8V278.6M627.5 261.3V279.5M628.5 260.8V279.0M629.5 261.3V277.8M630.5 260.8V277.4M631.5 260.5V278.9M632.5 259.6V277.8M633.5 259.9V276.6M634.5 261.8V278.0M635.5 262.6V277.4M636.5 262.6V276.9M637.5 262.5V277.8M638.5 262.4V276.1M639.5 258.4V277.1M640.5 261.7V277.2M641.5 263.0V276.6M642.5 263.5V278.4M643.5 263.8V276.3M644.5 261.3V276.3M645.5 261.4V276.5M646.5 263.3V278.6M647.5 264.6V277.7M648.5 265.5V276.6M649.5 264.9V277.5M650.5 263.6V276.2M651.5 265.0V276.6M652.5 265.1V276.1M653.5 263.1V276.3M654.5 263.6V276.7M655.5 264.3V276.6M656.5 263.5V278.1M657.5 265.5V279.9M658.5 264.4V279.0M659.5 263.8V279.7M660.5 264.3V277.9M661.5 262.7V278.1M662.5 263.2V277.8M663.5 263.3V276.0M664.5 264.2V277.5M665.5 262.8V277.4M666.5 261.9V277.6M667.5 263.3V278.5M668.5 261.3V276.4M669.5 260.7V276.4M670.5 262.5V276.8M671.5 262.1V277.5M672.5 259.9V277.5M673.5 261.0V277.5M674.5 259.7V277.9M675.5 258.5V278.0M676.5 260.0V276.7M677.5 261.9V276.9M678.5 263.1V276.5M679.5 262.4V277.8M680.5 260.9V277.2M681.5 261.0V276.9M682.5 259.6V276.9M683.5 262.5V278.0M684.5 263.1V280.0M685.5 264.5V278.3M686.5 263.4V277.5M687.5 263.1V279.3M688.5 263.6V277.3M689.5 263.3V278.5M690.5 262.3V277.2M691.5 262.2V277.0M692.5 262.8V278.2M693.5 264.2V277.7M694.5 262.9V276.8M695.5 261.6V278.8M696.5 262.5V279.5M697.5 261.6V279.1M698.5 262.4V278.4M699.5 262.3V277.1M700.5 261.4V277.0M701.5 260.9V281.2M702.5 262.1V280.8M703.5 262.6V280.0M704.5 260.9V278.0M705.5 261.1V278.3M706.5 260.5V278.6M707.5 261.8V278.0M708.5 263.3V278.8M709.5 263.4V278.6M710.5 262.5V278.1M711.5 263.2V277.3M712.5 264.0V277.7M713.5 264.5V278.0M714.5 263.6V279.1M715.5 263.2V277.4M716.5 261.5V276.5M717.5 262.5V277.2M718.5 260.9V276.0M719.5 261.5V276.7M720.5 262.2V276.3M721.5 262.6V277.2M722.5 264.4V275.9M723.5 265.0V276.9M724.5 263.9V276.9M725.5 262.8V276.8M726.5 262.3V277.4M727.5 263.1V277.4M728.5 262.1V276.5M729.5 261.1V276.5M730.5 261.4V276.9M731.5 262.5V275.8M732.5 263.9V275.5M733.5 263.5V275.8M734.5 262.4V276.0M735.5 264.0V276.2M736.5 263.8V276.1M737.5 263.3V277.0M738.5 262.6V277.6M739.5 263.5V277.6M740.5 262.2V276.5M741.5 262.5V276.5M742.5 260.0V275.0M743.5 263.6V274.9M744.5 262.0V274.6M745.5 261.7V276.0M746.5 262.0V275.5M747.5 261.4V276.2M748.5 263.2V276.6M749.5 263.2V276.9M750.5 262.8V277.7M751.5 263.0V276.2M752.5 262.5V276.2M753.5 259.7V277.0M754.5 260.7V277.1M755.5 261.4V276.9M756.5 262.4V276.9M757.5 262.8V278.0M758.5 262.9V276.9M759.5 262.7V276.6M760.5 262.4V276.2M761.5 261.9V278.0M762.5 262.1V279.9M763.5 263.2V278.8M764.5 263.0V278.3M765.5 262.6V276.7M766.5 263.7V276.5M767.5 263.0V276.7M768.5 264.1V277.6M769.5 264.1V276.9M770.5 263.2V278.2M771.5 262.3V278.1M772.5 263.1V278.5M773.5 264.1V277.9M774.5 264.7V277.9M775.5 264.9V278.1M776.5 263.6V279.1M777.5 263.9V278.5M778.5 264.1V278.2M779.5 264.6V277.2M780.5 263.3V279.0M781.5 264.6V276.5M782.5 262.0V276.1M783.5 261.8V277.3M784.5 262.3V275.8M785.5 262.0V277.6M786.5 262.5V276.3M787.5 262.3V275.5M788.5 263.3V276.3M789.5 264.2V275.9M790.5 263.3V275.2M791.5 263.9V277.0M792.5 262.7V276.1M793.5 263.4V275.9M794.5 264.3V276.7M795.5 264.9V278.0M796.5 262.9V278.5M797.5 262.6V279.9M798.5 262.2V279.1M799.5 262.8V278.5M800.5 261.5V277.4M801.5 261.3V277.2M802.5 261.4V277.6M803.5 260.9V277.6M804.5 261.1V276.1M805.5 259.5V276.2M806.5 262.4V277.3M807.5 262.1V276.4M808.5 262.5V275.4M809.5 263.2V275.7M810.5 261.7V276.7M811.5 262.5V275.9M812.5 262.5V275.4M813.5 263.0V276.1M814.5 261.6V276.8M815.5 261.6V276.8M816.5 262.8V276.7M817.5 262.0V277.4M818.5 260.9V276.7M819.5 260.6V278.9M820.5 260.7V277.2M821.5 263.1V276.3M822.5 262.1V277.0M823.5 263.1V276.6M824.5 263.2V278.8M825.5 261.3V277.2M826.5 263.0V276.9M827.5 264.7V276.2M828.5 263.5V277.0M829.5 264.6V277.9M830.5 264.1V278.4M831.5 265.2V278.9M832.5 264.8V280.5M833.5 263.8V278.7M834.5 263.8V278.9M835.5 264.9V279.4M836.5 263.2V279.9M837.5 262.2V278.3M838.5 263.2V277.8M839.5 264.1V276.5M840.5 263.3V276.0M841.5 265.1V276.9M842.5 263.6V278.0M843.5 264.6V277.8M844.5 264.2V277.5M845.5 262.9V277.9M846.5 261.1V278.4M847.5 264.6V278.7M848.5 264.2V277.7M849.5 264.5V277.1M850.5 264.1V276.7M851.5 263.1V277.5M852.5 262.3V276.5M853.5 264.2V276.1M854.5 263.8V277.2M855.5 265.4V279.6M856.5 264.8V277.5M857.5 263.1V276.9M858.5 262.3V275.7M859.5 263.2V277.6M860.5 264.4V278.0M861.5 265.3V277.3M862.5 265.5V279.0M863.5 265.2V279.4M864.5 265.4V280.0M865.5 265.4V278.8M866.5 263.7V277.8M867.5 264.6V277.5M868.5 263.3V278.1M869.5 264.8V277.7M870.5 263.7V278.2M871.5 264.9V277.9M872.5 264.9V280.7M873.5 263.5V279.5M874.5 263.9V278.2M875.5 263.3V276.0M876.5 263.0V277.3M877.5 264.5V276.4M878.5 263.6V276.8M879.5 262.0V279.5M880.5 262.4V278.6M881.5 263.8V277.1M882.5 263.2V277.4M883.5 262.7V276.8M884.5 262.7V275.9M885.5 263.7V275.6M886.5 263.9V275.0M887.5 262.6V274.8M888.5 262.0V275.7M889.5 261.4V276.3M890.5 265.7V273.0M891.5 266.5V272.9M909.5 267.0V272.9M910.5 267.4V272.1M911.5 268.4V271.6M912.5 269.0V270.9M921.5 267.9V273.4M922.5 267.7V273.2M923.5 267.0V273.5M924.5 267.1V273.3M925.5 266.5V273.4M926.5 267.2V272.8M927.5 267.2V273.2M928.5 267.4V272.7M929.5 266.6V272.8M930.5 266.6V273.4M931.5 266.5V273.0M932.5 267.2V272.7M933.5 266.2V272.6M934.5 267.0V272.9M935.5 268.1V273.4M936.5 268.1V273.6M937.5 268.0V273.6M938.5 268.1V273.5M939.5 267.6V273.7M940.5 267.5V273.2M941.5 267.5V273.7M942.5 267.3V272.9M943.5 267.5V272.7M944.5 266.6V273.5M945.5 267.6V272.2M946.5 267.7V272.2M947.5 267.5V271.8M948.5 267.3V271.9M949.5 267.6V271.7M950.5 266.6V272.7M951.5 267.0V272.5M952.5 266.8V272.1M953.5 267.2V272.2M954.5 267.5V272.3M955.5 267.3V272.1M956.5 267.2V272.3M957.5 267.4V272.9M958.5 267.4V272.8M959.5 267.6V271.8M960.5 267.7V272.3M961.5 268.0V272.3M962.5 268.0V272.5M963.5 267.7V273.0M964.5 267.5V272.6M965.5 267.8V272.8M966.5 267.2V273.1M967.5 267.5V272.7M968.5 267.4V272.4M969.5 267.7V271.8M970.5 268.0V272.2M971.5 267.2V272.1M972.5 267.6V272.5M973.5 267.7V272.6M974.5 267.3V272.4M975.5 267.1V272.3M976.5 267.0V272.2M977.5 266.7V272.4M978.5 266.2V271.9M979.5 266.4V272.2M980.5 266.7V272.6M981.5 266.7V271.9M982.5 267.0V273.0M983.5 268.0V272.8M984.5 268.1V273.3M985.5 267.4V273.5M986.5 267.9V273.2M987.5 267.7V273.4M988.5 267.8V273.3M989.5 267.1V273.1M990.5 267.3V272.9M991.5 267.7V272.6M992.5 267.8V272.8M993.5 267.4V272.7M994.5 267.2V272.9M995.5 267.0V273.1M996.5 267.1V272.9M997.5 267.8V272.9M998.5 267.3V273.2M999.5 268.1V273.4M1000.5 267.7V272.9M1001.5 267.5V273.2M1002.5 267.4V272.9M1003.5 267.4V273.0M1004.5 266.8V272.6M1005.5 267.9V273.2M1006.5 267.5V273.0M1007.5 267.4V273.4M1008.5 267.4V273.1M1009.5 267.4V273.0M1010.5 267.4V272.6M1011.5 267.7V272.4M1012.5 267.7V272.3M1013.5 267.5V272.1M1014.5 267.3V272.0M1015.5 267.5V272.1M1016.5 267.5V272.3M1017.5 267.7V272.3M1018.5 267.1V272.5M1019.5 267.3V272.3M1020.5 268.0V272.4M1021.5 268.0V272.3M1022.5 267.8V272.9M1023.5 268.0V272.5M1024.5 267.7V273.1M1025.5 267.6V272.8M1026.5 267.1V273.0M1027.5 267.5V272.7M1028.5 267.1V272.6M1029.5 266.9V272.6M1030.5 266.3V272.2M1031.5 266.3V272.7M1032.5 266.1V272.7M1033.5 266.6V272.6M1034.5 266.2V272.4M1035.5 266.0V272.4M1036.5 266.5V272.3M1037.5 266.8V272.6M1038.5 265.5V273.8M1039.5 265.7V273.5M1040.5 265.6V273.2M1041.5 266.0V273.1M1042.5 265.3V273.8M1043.5 265.1V274.0M1044.5 263.5V273.6M1045.5 264.8V273.7M1046.5 265.0V273.5M1047.5 265.4V273.3M1048.5 265.0V272.9M1049.5 265.0V274.2M1050.5 264.9V273.8M1051.5 265.0V273.4M1052.5 266.0V273.3M1053.5 265.3V272.6M1054.5 266.2V273.1M1055.5 265.8V274.2M1056.5 265.5V275.1M1057.5 265.1V274.3M1058.5 266.0V274.7M1059.5 266.1V274.1M1060.5 265.4V274.7M1061.5 266.1V274.7M1062.5 266.2V274.4M1063.5 265.7V274.1M1064.5 265.5V274.6M1065.5 266.4V274.2M1066.5 266.1V274.3M1067.5 266.9V274.2M1068.5 266.2V275.2M1069.5 266.4V274.9M1070.5 264.7V278.5M1071.5 264.2V276.7M1072.5 264.1V276.0M1073.5 263.5V277.1M1074.5 263.4V278.0M1075.5 263.8V276.1M1076.5 262.7V278.5M1077.5 263.8V276.5M1078.5 263.6V276.4M1079.5 263.6V275.8M1080.5 263.7V274.9M1081.5 264.1V276.6M1082.5 262.8V277.0M1083.5 263.2V277.6M1084.5 262.5V277.0M1085.5 264.0V276.4M1086.5 264.6V276.5M1087.5 265.6V276.2M1088.5 264.9V276.7M1089.5 265.1V277.5M1090.5 264.8V276.5M1091.5 265.6V276.6M1092.5 265.4V275.6M1093.5 266.2V275.9M1094.5 264.7V275.0M1095.5 264.3V276.0M1096.5 264.9V274.9M1097.5 265.4V275.9M1098.5 263.8V276.1M1099.5 265.0V276.4M1100.5 263.9V275.9M1101.5 263.9V277.1M1102.5 265.6V274.2M1103.5 266.4V273.9M1104.5 265.7V273.8M1105.5 266.2V273.3M1106.5 266.2V273.5M1107.5 266.5V273.5M1108.5 265.6V272.9M1109.5 266.0V273.7M1110.5 266.2V273.5M1111.5 266.0V272.9M1112.5 265.6V273.6M1113.5 266.4V274.1M1114.5 265.8V273.8M1115.5 266.1V273.5M1116.5 266.0V273.4M1117.5 266.7V273.3M1118.5 265.9V273.0M1119.5 266.0V273.2M1120.5 266.6V273.4M1121.5 266.1V273.2M1122.5 265.8V273.9M1123.5 266.4V274.2M1124.5 265.7V274.4M1125.5 265.3V274.1M1126.5 265.5V274.2M1127.5 265.2V274.0M1128.5 265.4V274.0M1129.5 266.5V273.9M1130.5 267.0V273.5M1131.5 265.9V273.2M1132.5 266.3V273.6M1133.5 266.1V273.3M1134.5 265.6V273.2M1135.5 265.4V273.6M1136.5 266.4V273.1M1137.5 266.0V272.7M1138.5 266.3V273.4M1139.5 265.9V273.0M1140.5 266.0V273.7M1141.5 266.5V272.8M1142.5 266.3V272.5M1143.5 266.5V273.3M1144.5 266.2V272.9M1145.5 267.0V272.6M1146.5 266.7V273.2M1147.5 267.0V272.6M1148.5 266.1V273.5M1149.5 266.1V273.0M1150.5 263.3V273.9M1151.5 264.7V274.3M1152.5 264.2V275.0M1153.5 264.2V275.2M1154.5 264.4V274.6M1155.5 263.8V275.2M1156.5 264.7V274.1M1157.5 263.9V273.9M1158.5 263.7V274.0M1159.5 264.0V274.7M1160.5 264.6V275.3M1161.5 264.3V274.9M1162.5 264.8V274.6M1163.5 265.8V274.6M1164.5 265.9V274.7M1165.5 266.1V274.4M1166.5 264.9V274.1M1167.5 265.8V274.4M1168.5 266.4V274.6M1169.5 266.2V275.0M1170.5 265.2V275.8M1171.5 266.0V274.4M1172.5 263.6V276.2M1173.5 264.2V276.1M1174.5 264.4V277.6M1175.5 263.9V276.4M1176.5 264.0V277.1M1177.5 264.4V276.2M1178.5 264.2V276.1M1179.5 264.6V275.6M1180.5 265.1V275.6M1181.5 264.9V276.5M1182.5 263.8V276.9M1183.5 264.6V278.0M1184.5 263.3V277.1M1185.5 264.0V278.3M1186.5 262.2V277.6M1187.5 262.6V276.8M1188.5 263.5V277.0M1189.5 262.3V276.1M1190.5 263.4V276.4M1191.5 263.7V277.1M1192.5 263.4V277.3M1193.5 261.2V275.7M1194.5 260.6V274.9M1195.5 261.5V276.7M1196.5 262.3V276.1M1197.5 263.0V276.3M1198.5 263.1V278.3M1199.5 263.3V275.6M1200.5 264.1V275.9M1201.5 262.9V276.4M1202.5 263.1V277.3M1203.5 262.4V278.7M1204.5 263.4V277.5M1205.5 262.1V278.5M1206.5 263.3V277.5M1207.5 262.7V280.1M1208.5 262.8V279.6M1209.5 262.8V280.2M1210.5 262.8V280.0M1211.5 263.6V277.5M1212.5 265.2V275.6M1213.5 264.2V275.0M1214.5 264.8V275.0M1215.5 265.4V274.5M1216.5 266.4V273.6M1217.5 267.7V271.9" stroke="#3232c8" stroke-width="1"/><path d="M147.5 268.0V272.0M148.5 268.0V272.0M149.5 267.8V272.2M150.5 268.1V271.9M151.5 267.9V272.1M152.5 267.9V272.1M153.5 268.1V271.9M154.5 267.7V272.3M155.5 267.3V272.7M156.5 267.0V273.0M157.5 266.7V273.3M158.5 266.8V273.2M159.5 267.2V272.8M160.5 266.9V273.1M161.5 266.7V273.3M162.5 266.7V273.3M163.5 267.2V272.8M164.5 267.6V272.4M165.5 268.2V271.8M166.5 267.6V272.4M167.5 268.4V271.6M168.5 268.4V271.6M169.5 268.5V271.5M170.5 268.4V271.6M171.5 267.5V272.5M172.5 267.2V272.8M173.5 267.4V272.6M174.5 267.2V272.8M175.5 267.1V272.9M176.5 267.6V272.4M177.5 267.4V272.6M178.5 267.6V272.4M179.5 266.8V273.2M180.5 266.6V273.4M181.5 267.2V272.8M182.5 267.6V272.4M183.5 268.0V272.0M184.5 268.0V272.0M185.5 267.4V272.6M186.5 267.4V272.6M187.5 267.3V272.7M188.5 267.0V273.0M189.5 267.3V272.7M190.5 267.1V272.9M191.5 266.8V273.2M192.5 266.8V273.2M193.5 267.0V273.0M194.5 267.0V273.0M195.5 267.0V273.0M196.5 266.9V273.1M197.5 267.1V272.9M198.5 267.1V272.9M199.5 267.3V272.7M200.5 267.1V272.9M201.5 266.9V273.1M202.5 267.0V273.0M203.5 267.0V273.0M204.5 266.8V273.2M205.5 267.0V273.0M206.5 267.2V272.8M207.5 267.7V272.3M208.5 267.7V272.3M209.5 267.0V273.0M210.5 267.3V272.7M211.5 267.1V272.9M212.5 266.8V273.2M213.5 267.0V273.0M214.5 266.7V273.3M215.5 267.0V273.0M216.5 267.0V273.0M217.5 267.3V272.7M218.5 267.4V272.6M219.5 267.3V272.7M220.5 267.4V272.6M221.5 267.2V272.8M222.5 267.1V272.9M223.5 267.2V272.8M224.5 267.2V272.8M225.5 266.8V273.2M226.5 266.8V273.2M227.5 267.3V272.7M228.5 267.5V272.5M229.5 267.1V272.9M230.5 267.1V272.9M231.5 267.1V272.9M232.5 267.4V272.6M233.5 267.4V272.6M234.5 267.5V272.5M235.5 267.3V272.7M236.5 267.1V272.9M237.5 267.1V272.9M238.5 267.2V272.8M239.5 267.3V272.7M240.5 267.4V272.6M241.5 267.5V272.5M242.5 268.0V272.0M243.5 268.0V272.0M244.5 267.9V272.1M245.5 267.2V272.8M246.5 267.3V272.7M247.5 267.2V272.8M248.5 267.0V273.0M249.5 266.7V273.3M250.5 266.8V273.2M251.5 266.8V273.2M252.5 266.8V273.2M253.5 267.1V272.9M254.5 267.0V273.0M255.5 266.8V273.2M256.5 267.3V272.7M257.5 267.4V272.6M258.5 267.5V272.5M259.5 267.4V272.6M260.5 267.2V272.8M261.5 267.1V272.9M262.5 266.9V273.1M263.5 267.2V272.8M264.5 267.1V272.9M265.5 267.1V272.9M266.5 267.4V272.6M267.5 267.7V272.3M268.5 267.2V272.8M269.5 266.9V273.1M270.5 267.0V273.0M271.5 267.3V272.7M272.5 267.4V272.6M273.5 268.0V272.0M274.5 267.8V272.2M275.5 267.4V272.6M276.5 267.3V272.7M277.5 267.0V273.0M278.5 267.8V272.2M279.5 268.0V272.0M280.5 267.7V272.3M281.5 267.5V272.5M282.5 267.3V272.7M283.5 267.3V272.7M284.5 267.3V272.7M285.5 267.2V272.8M286.5 267.3V272.7M287.5 267.8V272.2M288.5 267.8V272.2M289.5 267.6V272.4M290.5 267.2V272.8M291.5 267.0V273.0M292.5 267.2V272.8M293.5 267.5V272.5M294.5 267.6V272.4M295.5 267.5V272.5M296.5 267.3V272.7M297.5 267.5V272.5M298.5 267.0V273.0M299.5 267.1V272.9M300.5 267.0V273.0M301.5 267.0V273.0M302.5 267.6V272.4M303.5 267.5V272.5M304.5 267.6V272.4M305.5 268.1V271.9M306.5 267.8V272.2M307.5 268.1V271.9M308.5 267.5V272.5M309.5 267.7V272.3M310.5 267.5V272.5M311.5 267.5V272.5M312.5 267.2V272.8M313.5 267.3V272.7M314.5 267.6V272.4M315.5 267.8V272.2M316.5 267.7V272.3M317.5 268.0V272.0M318.5 267.8V272.2M319.5 267.8V272.2M320.5 266.9V273.1M321.5 267.1V272.9M322.5 267.2V272.8M323.5 267.0V273.0M324.5 267.4V272.6M325.5 267.3V272.7M326.5 267.6V272.4M327.5 267.6V272.4M328.5 267.1V272.9M329.5 267.2V272.8M330.5 266.9V273.1M331.5 267.1V272.9M332.5 267.4V272.6M333.5 267.5V272.5M334.5 267.6V272.4M335.5 267.2V272.8M336.5 267.3V272.7M337.5 267.4V272.6M338.5 267.6V272.4M339.5 267.8V272.2M340.5 267.7V272.3M341.5 267.4V272.6M342.5 267.4V272.6M343.5 267.1V272.9M344.5 267.0V273.0M345.5 267.1V272.9M346.5 267.1V272.9M347.5 267.0V273.0M348.5 266.7V273.3M349.5 266.8V273.2M350.5 266.7V273.3M351.5 267.0V273.0M352.5 267.1V272.9M353.5 267.3V272.7M354.5 267.7V272.3M355.5 267.4V272.6M356.5 267.2V272.8M357.5 267.3V272.7M358.5 267.5V272.5M359.5 267.5V272.5M360.5 267.7V272.3M361.5 267.4V272.6M362.5 267.8V272.2M363.5 267.6V272.4M364.5 267.9V272.1M365.5 267.3V272.7M366.5 267.2V272.8M367.5 267.1V272.9M368.5 266.9V273.1M369.5 266.9V273.1M370.5 267.1V272.9M371.5 267.1V272.9M372.5 266.8V273.2M373.5 266.9V273.1M374.5 266.9V273.1M375.5 267.2V272.8M376.5 267.2V272.8M377.5 267.0V273.0M378.5 266.7V273.3M379.5 266.8V273.2M380.5 267.2V272.8M381.5 267.4V272.6M382.5 267.6V272.4M383.5 267.9V272.1M384.5 268.0V272.0M385.5 267.7V272.3M386.5 267.7V272.3M387.5 267.2V272.8M388.5 267.6V272.4M389.5 267.4V272.6M390.5 267.9V272.1M391.5 267.8V272.2M392.5 267.6V272.4M393.5 268.0V272.0M394.5 267.7V272.3M395.5 267.4V272.6M396.5 267.6V272.4M397.5 267.2V272.8M398.5 267.5V272.5M399.5 267.0V273.0M400.5 267.2V272.8M401.5 267.6V272.4M402.5 267.4V272.6M403.5 267.2V272.8M404.5 267.7V272.3M405.5 267.6V272.4M406.5 267.4V272.6M407.5 267.3V272.7M408.5 266.7V273.3M409.5 266.8V273.2M410.5 266.6V273.4M411.5 266.7V273.3M412.5 266.9V273.1M413.5 267.4V272.6M414.5 267.6V272.4M415.5 267.4V272.6M416.5 267.8V272.2M417.5 267.8V272.2M418.5 267.9V272.1M419.5 267.9V272.1M420.5 268.1V271.9M421.5 267.8V272.2M422.5 267.0V273.0M423.5 267.1V272.9M424.5 267.4V272.6M425.5 267.7V272.3M426.5 268.1V271.9M427.5 267.7V272.3M428.5 267.1V272.9M429.5 267.3V272.7M430.5 267.2V272.8M431.5 267.3V272.7M432.5 267.5V272.5M433.5 267.6V272.4M434.5 267.5V272.5M435.5 267.8V272.2M436.5 267.5V272.5M437.5 267.2V272.8M438.5 267.1V272.9M439.5 267.3V272.7M440.5 267.8V272.2M441.5 267.9V272.1M442.5 268.0V272.0M443.5 267.6V272.4M444.5 267.9V272.1M445.5 267.8V272.2M446.5 267.3V272.7M447.5 267.3V272.7M448.5 267.3V272.7M449.5 267.7V272.3M450.5 267.8V272.2M451.5 267.7V272.3M452.5 267.3V272.7M453.5 266.9V273.1M454.5 267.1V272.9M455.5 267.5V272.5M456.5 267.5V272.5M457.5 267.6V272.4M458.5 267.9V272.1M459.5 268.0V272.0M460.5 268.0V272.0M461.5 268.0V272.0M462.5 267.8V272.2M463.5 267.6V272.4M464.5 267.2V272.8M465.5 267.4V272.6M466.5 267.3V272.7M467.5 267.5V272.5M468.5 267.3V272.7M469.5 267.6V272.4M470.5 267.2V272.8M471.5 267.2V272.8M472.5 267.1V272.9M473.5 267.3V272.7M474.5 267.3V272.7M475.5 267.2V272.8M476.5 267.1V272.9M477.5 266.9V273.1M478.5 267.0V273.0M479.5 266.7V273.3M480.5 267.0V273.0M481.5 266.7V273.3M482.5 267.1V272.9M483.5 266.9V273.1M484.5 267.3V272.7M485.5 267.3V272.7M486.5 267.8V272.2M487.5 267.7V272.3M488.5 267.5V272.5M489.5 267.4V272.6M490.5 267.6V272.4M491.5 267.8V272.2M492.5 267.9V272.1M493.5 268.1V271.9M494.5 268.1V271.9M495.5 267.8V272.2M496.5 268.1V271.9M497.5 267.5V272.5M498.5 267.5V272.5M499.5 267.5V272.5M500.5 267.1V272.9M501.5 267.3V272.7M502.5 267.5V272.5M503.5 267.6V272.4M504.5 267.6V272.4M505.5 268.0V272.0M506.5 267.5V272.5M507.5 267.9V272.1M508.5 267.9V272.1M509.5 267.4V272.6M510.5 267.7V272.3M511.5 267.6V272.4M512.5 267.2V272.8M513.5 267.1V272.9M514.5 267.1V272.9M515.5 267.4V272.6M516.5 267.6V272.4M517.5 267.2V272.8M518.5 267.1V272.9M519.5 267.3V272.7M520.5 267.0V273.0M521.5 267.3V272.7M522.5 267.3V272.7M523.5 267.3V272.7M524.5 267.5V272.5M525.5 267.5V272.5M526.5 267.5V272.5M527.5 267.0V273.0M528.5 266.8V273.2M529.5 266.9V273.1M530.5 266.7V273.3M531.5 266.9V273.1M532.5 266.9V273.1M533.5 267.5V272.5M534.5 268.1V271.9M535.5 267.8V272.2M536.5 266.9V273.1M537.5 266.6V273.4M538.5 266.7V273.3M539.5 267.3V272.7M540.5 267.1V272.9M541.5 267.0V273.0M542.5 267.5V272.5M543.5 267.8V272.2M544.5 267.9V272.1M545.5 267.5V272.5M546.5 267.2V272.8M547.5 267.6V272.4M548.5 267.2V272.8M549.5 267.0V273.0M550.5 267.4V272.6M551.5 267.1V272.9M552.5 266.7V273.3M553.5 266.8V273.2M554.5 267.2V272.8M555.5 267.3V272.7M556.5 267.6V272.4M557.5 267.3V272.7M558.5 267.5V272.5M559.5 267.3V272.7M560.5 266.9V273.1M561.5 266.7V273.3M562.5 267.0V273.0M563.5 266.8V273.2M564.5 266.9V273.1M565.5 266.7V273.3M566.5 266.8V273.2M567.5 267.0V273.0M568.5 267.1V272.9M569.5 267.2V272.8M570.5 267.6V272.4M571.5 267.3V272.7M572.5 267.0V273.0M573.5 267.4V272.6M574.5 267.5V272.5M575.5 267.4V272.6M576.5 267.6V272.4M577.5 267.6V272.4M578.5 267.1V272.9M579.5 266.9V273.1M580.5 267.2V272.8M581.5 267.3V272.7M582.5 267.1V272.9M583.5 267.0V273.0M584.5 267.3V272.7M585.5 267.4V272.6M586.5 267.0V273.0M587.5 266.9V273.1M588.5 266.9V273.1M589.5 267.4V272.6M590.5 267.6V272.4M591.5 267.6V272.4M592.5 267.6V272.4M593.5 266.9V273.1M594.5 267.0V273.0M595.5 267.0V273.0M596.5 266.7V273.3M597.5 266.6V273.4M598.5 266.8V273.2M599.5 266.7V273.3M600.5 266.9V273.1M601.5 266.8V273.2M602.5 267.2V272.8M603.5 267.1V272.9M604.5 267.1V272.9M605.5 267.1V272.9M606.5 267.3V272.7M607.5 267.3V272.7M608.5 267.7V272.3M609.5 267.6V272.4M610.5 267.4V272.6M611.5 266.9V273.1M612.5 266.9V273.1M613.5 266.7V273.3M614.5 266.7V273.3M615.5 267.1V272.9M616.5 267.0V273.0M617.5 267.3V272.7M618.5 267.5V272.5M619.5 267.9V272.1M620.5 267.6V272.4M621.5 268.1V271.9M622.5 267.7V272.3M623.5 267.7V272.3M624.5 267.5V272.5M625.5 267.6V272.4M626.5 267.5V272.5M627.5 267.1V272.9M628.5 267.1V272.9M629.5 267.2V272.8M630.5 267.2V272.8M631.5 267.0V273.0M632.5 267.1V272.9M633.5 267.4V272.6M634.5 267.5V272.5M635.5 267.6V272.4M636.5 268.0V272.0M637.5 267.8V272.2M638.5 267.1V272.9M639.5 266.9V273.1M640.5 267.4V272.6M641.5 267.6V272.4M642.5 267.7V272.3M643.5 267.5V272.5M644.5 267.2V272.8M645.5 266.8V273.2M646.5 267.3V272.7M647.5 267.5V272.5M648.5 267.7V272.3M649.5 267.9V272.1M650.5 267.4V272.6M651.5 267.6V272.4M652.5 267.3V272.7M653.5 267.4V272.6M654.5 266.9V273.1M655.5 267.4V272.6M656.5 267.7V272.3M657.5 267.9V272.1M658.5 267.6V272.4M659.5 268.0V272.0M660.5 268.0V272.0M661.5 267.9V272.1M662.5 267.7V272.3M663.5 267.3V272.7M664.5 267.2V272.8M665.5 267.3V272.7M666.5 267.3V272.7M667.5 267.0V273.0M668.5 266.9V273.1M669.5 267.1V272.9M670.5 266.8V273.2M671.5 267.3V272.7M672.5 267.3V272.7M673.5 267.2V272.8M674.5 267.1V272.9M675.5 267.0V273.0M676.5 267.1V272.9M677.5 267.2V272.8M678.5 267.2V272.8M679.5 267.2V272.8M680.5 267.1V272.9M681.5 267.0V273.0M682.5 266.9V273.1M683.5 267.8V272.2M684.5 268.1V271.9M685.5 268.0V272.0M686.5 267.7V272.3M687.5 267.9V272.1M688.5 267.5V272.5M689.5 267.3V272.7M690.5 267.4V272.6M691.5 267.2V272.8M692.5 267.5V272.5M693.5 267.8V272.2M694.5 267.5V272.5M695.5 267.3V272.7M696.5 267.3V272.7M697.5 267.2V272.8M698.5 267.1V272.9M699.5 267.1V272.9M700.5 267.1V272.9M701.5 267.3V272.7M702.5 267.6V272.4M703.5 267.5V272.5M704.5 266.9V273.1M705.5 267.1V272.9M706.5 266.8V273.2M707.5 267.4V272.6M708.5 267.2V272.8M709.5 267.2V272.8M710.5 267.3V272.7M711.5 267.6V272.4M712.5 267.7V272.3M713.5 267.5V272.5M714.5 267.5V272.5M715.5 267.2V272.8M716.5 267.1V272.9M717.5 267.1V272.9M718.5 267.1V272.9M719.5 266.8V273.2M720.5 266.8V273.2M721.5 267.0V273.0M722.5 267.4V272.6M723.5 267.5V272.5M724.5 267.5V272.5M725.5 267.0V273.0M726.5 266.9V273.1M727.5 266.7V273.3M728.5 267.0V273.0M729.5 266.8V273.2M730.5 266.7V273.3M731.5 267.4V272.6M732.5 267.3V272.7M733.5 267.4V272.6M734.5 267.1V272.9M735.5 267.5V272.5M736.5 267.5V272.5M737.5 267.8V272.2M738.5 267.6V272.4M739.5 267.8V272.2M740.5 267.4V272.6M741.5 267.5V272.5M742.5 267.5V272.5M743.5 267.6V272.4M744.5 267.4V272.6M745.5 267.1V272.9M746.5 267.5V272.5M747.5 267.1V272.9M748.5 267.6V272.4M749.5 267.7V272.3M750.5 268.0V272.0M751.5 267.9V272.1M752.5 267.2V272.8M753.5 266.5V273.5M754.5 266.8V273.2M755.5 267.4V272.6M756.5 267.1V272.9M757.5 267.3V272.7M758.5 267.3V272.7M759.5 267.6V272.4M760.5 267.5V272.5M761.5 267.1V272.9M762.5 267.0V273.0M763.5 266.9V273.1M764.5 267.4V272.6M765.5 267.1V272.9M766.5 267.5V272.5M767.5 267.2V272.8M768.5 267.4V272.6M769.5 267.3V272.7M770.5 267.2V272.8M771.5 267.0V273.0M772.5 267.5V272.5M773.5 267.7V272.3M774.5 267.7V272.3M775.5 267.7V272.3M776.5 267.2V272.8M777.5 267.2V272.8M778.5 267.6V272.4M779.5 267.2V272.8M780.5 267.3V272.7M781.5 267.1V272.9M782.5 267.0V273.0M783.5 267.0V273.0M784.5 266.7V273.3M785.5 266.6V273.4M786.5 266.6V273.4M787.5 267.2V272.8M788.5 267.6V272.4M789.5 267.8V272.2M790.5 267.5V272.5M791.5 267.6V272.4M792.5 267.2V272.8M793.5 267.6V272.4M794.5 267.8V272.2M795.5 267.9V272.1M796.5 267.5V272.5M797.5 267.6V272.4M798.5 267.7V272.3M799.5 267.5V272.5M800.5 266.9V273.1M801.5 267.1V272.9M802.5 267.2V272.8M803.5 266.8V273.2M804.5 267.0V273.0M805.5 266.9V273.1M806.5 267.4V272.6M807.5 267.4V272.6M808.5 267.3V272.7M809.5 267.8V272.2M810.5 267.5V272.5M811.5 267.7V272.3M812.5 267.6V272.4M813.5 267.9V272.1M814.5 267.4V272.6M815.5 267.3V272.7M816.5 267.2V272.8M817.5 267.2V272.8M818.5 267.1V272.9M819.5 266.7V273.3M820.5 267.3V272.7M821.5 267.4V272.6M822.5 267.6V272.4M823.5 267.8V272.2M824.5 267.2V272.8M825.5 267.2V272.8M826.5 267.4V272.6M827.5 267.9V272.1M828.5 267.9V272.1M829.5 268.1V271.9M830.5 267.7V272.3M831.5 268.0V272.0M832.5 267.8V272.2M833.5 267.6V272.4M834.5 268.0V272.0M835.5 267.7V272.3M836.5 267.1V272.9M837.5 267.0V273.0M838.5 267.0V273.0M839.5 267.4V272.6M840.5 267.7V272.3M841.5 267.6V272.4M842.5 267.6V272.4M843.5 267.5V272.5M844.5 267.3V272.7M845.5 267.4V272.6M846.5 267.5V272.5M847.5 267.6V272.4M848.5 267.9V272.1M849.5 268.0V272.0M850.5 267.6V272.4M851.5 267.0V273.0M852.5 267.3V272.7M853.5 267.1V272.9M854.5 267.9V272.1M855.5 267.6V272.4M856.5 267.9V272.1M857.5 267.6V272.4M858.5 267.2V272.8M859.5 267.3V272.7M860.5 267.8V272.2M861.5 267.5V272.5M862.5 267.5V272.5M863.5 267.8V272.2M864.5 267.6V272.4M865.5 267.6V272.4M866.5 267.7V272.3M867.5 267.3V272.7M868.5 267.4V272.6M869.5 267.2V272.8M870.5 267.2V272.8M871.5 267.7V272.3M872.5 267.4V272.6M873.5 267.6V272.4M874.5 267.7V272.3M875.5 267.7V272.3M876.5 267.4V272.6M877.5 267.7V272.3M878.5 267.5V272.5M879.5 267.4V272.6M880.5 267.5V272.5M881.5 267.8V272.2M882.5 267.7V272.3M883.5 267.7V272.3M884.5 267.9V272.1M885.5 267.7V272.3M886.5 267.5V272.5M887.5 267.6V272.4M888.5 267.2V272.8M889.5 267.1V272.9M890.5 268.4V271.6M891.5 268.2V271.8M909.5 269.1V270.9M910.5 269.1V270.9M911.5 269.1V270.9M912.5 269.1V270.9M921.5 269.1V270.9M922.5 269.0V271.0M923.5 268.8V271.2M924.5 268.8V271.2M925.5 268.8V271.2M926.5 268.9V271.1M927.5 269.1V270.9M928.5 269.0V271.0M929.5 268.7V271.3M930.5 268.7V271.3M931.5 268.6V271.4M932.5 268.8V271.2M933.5 268.8V271.2M934.5 268.8V271.2M935.5 269.1V270.9M936.5 269.0V271.0M937.5 269.1V270.9M938.5 269.1V270.9M939.5 269.1V270.9M940.5 269.1V270.9M941.5 269.0V271.0M942.5 268.8V271.2M943.5 268.8V271.2M944.5 269.0V271.0M945.5 269.0V271.0M946.5 269.2V270.8M947.5 269.1V270.9M948.5 269.1V270.9M949.5 269.0V271.0M950.5 268.9V271.1M951.5 268.7V271.3M952.5 268.8V271.2M953.5 268.9V271.1M954.5 269.0V271.0M955.5 268.9V271.1M956.5 268.9V271.1M957.5 268.8V271.2M958.5 268.9V271.1M959.5 269.1V270.9M960.5 269.0V271.0M961.5 269.1V270.9M962.5 269.1V270.9M963.5 268.9V271.1M964.5 268.9V271.1M965.5 268.8V271.2M966.5 268.9V271.1M967.5 268.9V271.1M968.5 269.1V270.9M969.5 269.2V270.8M970.5 269.1V270.9M971.5 269.1V270.9M972.5 269.2V270.8M973.5 269.1V270.9M974.5 268.9V271.1M975.5 268.9V271.1M976.5 268.9V271.1M977.5 268.7V271.3M978.5 268.7V271.3M979.5 268.8V271.2M980.5 268.7V271.3M981.5 268.7V271.3M982.5 268.9V271.1M983.5 269.0V271.0M984.5 269.1V270.9M985.5 269.0V271.0M986.5 269.0V271.0M987.5 269.0V271.0M988.5 268.9V271.1M989.5 268.9V271.1M990.5 268.9V271.1M991.5 268.9V271.1M992.5 269.0V271.0M993.5 268.9V271.1M994.5 268.9V271.1M995.5 268.8V271.2M996.5 268.8V271.2M997.5 268.9V271.1M998.5 269.0V271.0M999.5 269.2V270.8M1000.5 269.1V270.9M1001.5 269.2V270.8M1002.5 269.2V270.8M1003.5 269.1V270.9M1004.5 269.1V270.9M1005.5 269.2V270.8M1006.5 269.2V270.8M1007.5 269.2V270.8M1008.5 269.1V270.9M1009.5 269.2V270.8M1010.5 269.0V271.0M1011.5 269.0V271.0M1012.5 269.0V271.0M1013.5 269.0V271.0M1014.5 269.0V271.0M1015.5 268.9V271.1M1016.5 269.0V271.0M1017.5 268.8V271.2M1018.5 269.0V271.0M1019.5 269.0V271.0M1020.5 269.1V270.9M1021.5 269.1V270.9M1022.5 269.1V270.9M1023.5 269.1V270.9M1024.5 269.2V270.8M1025.5 269.1V270.9M1026.5 269.1V270.9M1027.5 269.0V271.0M1028.5 268.9V271.1M1029.5 268.8V271.2M1030.5 268.7V271.3M1031.5 268.8V271.2M1032.5 268.8V271.2M1033.5 268.6V271.4M1034.5 268.7V271.3M1035.5 268.7V271.3M1036.5 268.9V271.1M1037.5 269.1V270.9M1038.5 268.5V271.5M1039.5 268.8V271.2M1040.5 268.7V271.3M1041.5 268.6V271.4M1042.5 268.4V271.6M1043.5 268.3V271.7M1044.5 268.0V272.0M1045.5 268.1V271.9M1046.5 268.1V271.9M1047.5 268.4V271.6M1048.5 268.3V271.7M1049.5 268.1V271.9M1050.5 268.1V271.9M1051.5 268.1V271.9M1052.5 268.4V271.6M1053.5 268.5V271.5M1054.5 268.5V271.5M1055.5 268.4V271.6M1056.5 268.4V271.6M1057.5 268.4V271.6M1058.5 268.3V271.7M1059.5 268.2V271.8M1060.5 268.3V271.7M1061.5 268.5V271.5M1062.5 268.3V271.7M1063.5 268.5V271.5M1064.5 268.2V271.8M1065.5 268.3V271.7M1066.5 268.4V271.6M1067.5 268.6V271.4M1068.5 268.7V271.3M1069.5 268.5V271.5M1070.5 267.8V272.2M1071.5 267.3V272.7M1072.5 267.3V272.7M1073.5 267.3V272.7M1074.5 267.4V272.6M1075.5 267.7V272.3M1076.5 267.8V272.2M1077.5 268.0V272.0M1078.5 267.8V272.2M1079.5 267.6V272.4M1080.5 267.7V272.3M1081.5 267.8V272.2M1082.5 267.3V272.7M1083.5 267.5V272.5M1084.5 267.7V272.3M1085.5 267.8V272.2M1086.5 267.6V272.4M1087.5 268.0V272.0M1088.5 267.9V272.1M1089.5 268.0V272.0M1090.5 268.1V271.9M1091.5 267.9V272.1M1092.5 268.1V271.9M1093.5 267.8V272.2M1094.5 267.9V272.1M1095.5 267.6V272.4M1096.5 267.7V272.3M1097.5 267.9V272.1M1098.5 268.3V271.7M1099.5 268.1V271.9M1100.5 267.5V272.5M1101.5 267.3V272.7M1102.5 268.4V271.6M1103.5 268.5V271.5M1104.5 268.4V271.6M1105.5 268.4V271.6M1106.5 268.5V271.5M1107.5 268.6V271.4M1108.5 268.6V271.4M1109.5 268.3V271.7M1110.5 268.4V271.6M1111.5 268.4V271.6M1112.5 268.5V271.5M1113.5 268.6V271.4M1114.5 268.6V271.4M1115.5 268.8V271.2M1116.5 268.6V271.4M1117.5 268.6V271.4M1118.5 268.7V271.3M1119.5 268.5V271.5M1120.5 268.5V271.5M1121.5 268.5V271.5M1122.5 268.5V271.5M1123.5 268.5V271.5M1124.5 268.5V271.5M1125.5 268.4V271.6M1126.5 268.4V271.6M1127.5 268.4V271.6M1128.5 268.4V271.6M1129.5 268.6V271.4M1130.5 268.8V271.2M1131.5 268.8V271.2M1132.5 268.8V271.2M1133.5 268.6V271.4M1134.5 268.4V271.6M1135.5 268.5V271.5M1136.5 268.4V271.6M1137.5 268.4V271.6M1138.5 268.5V271.5M1139.5 268.4V271.6M1140.5 268.4V271.6M1141.5 268.4V271.6M1142.5 268.5V271.5M1143.5 268.5V271.5M1144.5 268.5V271.5M1145.5 268.6V271.4M1146.5 268.6V271.4M1147.5 268.6V271.4M1148.5 268.5V271.5M1149.5 268.3V271.7M1150.5 267.9V272.1M1151.5 267.8V272.2M1152.5 267.9V272.1M1153.5 267.8V272.2M1154.5 267.8V272.2M1155.5 267.8V272.2M1156.5 268.1V271.9M1157.5 268.0V272.0M1158.5 267.8V272.2M1159.5 268.0V272.0M1160.5 268.0V272.0M1161.5 267.9V272.1M1162.5 267.9V272.1M1163.5 268.1V271.9M1164.5 268.2V271.8M1165.5 268.1V271.9M1166.5 268.0V272.0M1167.5 267.8V272.2M1168.5 267.9V272.1M1169.5 268.3V271.7M1170.5 268.4V271.6M1171.5 268.6V271.4M1172.5 267.7V272.3M1173.5 267.4V272.6M1174.5 267.3V272.7M1175.5 267.3V272.7M1176.5 267.5V272.5M1177.5 267.2V272.8M1178.5 267.6V272.4M1179.5 268.1V271.9M1180.5 267.9V272.1M1181.5 267.6V272.4M1182.5 267.4V272.6M1183.5 267.1V272.9M1184.5 267.3V272.7M1185.5 267.2V272.8M1186.5 266.9V273.1M1187.5 267.4V272.6M1188.5 267.2V272.8M1189.5 267.5V272.5M1190.5 267.2V272.8M1191.5 267.8V272.2M1192.5 267.6V272.4M1193.5 266.7V273.3M1194.5 266.9V273.1M1195.5 266.5V273.5M1196.5 266.9V273.1M1197.5 266.8V273.2M1198.5 267.0V273.0M1199.5 267.3V272.7M1200.5 267.3V272.7M1201.5 267.3V272.7M1202.5 267.4V272.6M1203.5 267.3V272.7M1204.5 266.9V273.1M1205.5 267.3V272.7M1206.5 267.3V272.7M1207.5 267.4V272.6M1208.5 267.1V272.9M1209.5 267.1V272.9M1210.5 268.0V272.0M1211.5 267.9V272.1M1212.5 267.9V272.1M1213.5 267.7V272.3M1214.5 267.4V272.6M1215.5 267.5V272.5M1216.5 267.4V272.6M1217.5 267.6V272.4" stroke="#6464dc" stroke-width="1"/></svg>
<svg style="left:0;top:0" width="1280" height="858"><path d="M131 420.5H147" stroke="#333" stroke-width="1"/><path d="M147 420.5H1264" stroke="#3434c4" stroke-width="1"/><path d="M147.5 413.6V427.8M148.5 413.6V426.3M149.5 413.7V428.7M150.5 412.4V428.3M151.5 414.2V427.6M152.5 414.1V427.4M153.5 415.2V427.1M154.5 414.3V426.5M155.5 413.2V426.0M156.5 411.5V425.9M157.5 412.9V427.1M158.5 413.8V427.7M159.5 413.0V427.7M160.5 412.2V429.0M161.5 411.3V428.7M162.5 411.8V428.9M163.5 411.7V428.4M164.5 412.0V426.6M165.5 413.4V426.9M166.5 413.3V425.8M167.5 417.4V422.6M168.5 417.0V422.3M169.5 416.8V422.3M170.5 416.8V422.1M171.5 410.1V427.1M172.5 411.4V427.4M173.5 410.8V425.8M174.5 409.0V430.0M175.5 407.0V427.7M176.5 412.3V425.8M177.5 413.1V427.2M178.5 412.3V425.7M179.5 411.5V427.9M180.5 410.3V427.8M181.5 412.1V427.2M182.5 413.7V426.2M183.5 412.4V426.8M184.5 414.2V427.0M185.5 413.7V426.5M186.5 413.2V427.0M187.5 412.2V428.2M188.5 412.8V424.7M189.5 412.5V424.5M190.5 411.8V425.7M191.5 412.1V425.3M192.5 411.8V425.8M193.5 412.6V426.5M194.5 411.9V428.0M195.5 413.0V428.2M196.5 412.3V426.2M197.5 412.4V425.3M198.5 413.2V424.7M199.5 413.2V424.8M200.5 412.0V424.9M201.5 412.6V425.6M202.5 412.5V426.4M203.5 411.9V426.3M204.5 411.1V426.0M205.5 411.6V427.4M206.5 411.2V427.2M207.5 412.1V427.9M208.5 411.5V427.4M209.5 412.3V425.4M210.5 412.0V424.6M211.5 412.0V425.4M212.5 410.2V426.1M213.5 409.3V426.2M214.5 409.8V426.4M215.5 411.0V425.8M216.5 410.8V425.9M217.5 411.3V425.0M218.5 412.7V425.7M219.5 411.7V427.1M220.5 412.8V426.5M221.5 410.8V426.3M222.5 410.3V427.4M223.5 410.4V426.7M224.5 410.9V426.3M225.5 410.4V426.8M226.5 411.2V426.3M227.5 412.7V427.9M228.5 411.7V427.3M229.5 412.1V426.7M230.5 411.5V427.2M231.5 411.2V428.2M232.5 413.1V427.6M233.5 412.9V428.4M234.5 413.7V427.8M235.5 408.1V432.7M236.5 409.9V430.7M237.5 413.0V429.2M238.5 412.6V427.1M239.5 412.8V428.1M240.5 411.7V428.8M241.5 413.6V425.9M242.5 413.4V425.6M243.5 413.5V427.1M244.5 412.8V427.5M245.5 411.9V427.8M246.5 413.2V429.0M247.5 411.6V429.0M248.5 411.5V428.5M249.5 410.1V426.8M250.5 411.4V426.5M251.5 412.2V427.1M252.5 410.6V426.5M253.5 412.6V428.2M254.5 412.5V427.8M255.5 411.7V427.2M256.5 413.8V428.1M257.5 413.5V429.1M258.5 413.9V427.9M259.5 413.5V428.5M260.5 411.8V428.7M261.5 412.7V428.8M262.5 412.1V429.3M263.5 413.6V430.1M264.5 414.1V430.3M265.5 413.2V430.7M266.5 413.6V427.3M267.5 413.4V426.8M268.5 413.8V428.2M269.5 412.4V429.0M270.5 413.4V430.4M271.5 412.9V429.3M272.5 414.0V430.2M273.5 415.5V428.4M274.5 413.2V428.2M275.5 413.5V428.2M276.5 413.7V429.2M277.5 412.8V428.8M278.5 414.0V428.8M279.5 415.1V428.3M280.5 414.3V427.9M281.5 414.0V428.0M282.5 412.2V428.0M283.5 412.4V429.4M284.5 413.5V427.5M285.5 412.7V427.2M286.5 413.7V427.6M287.5 413.3V428.1M288.5 413.9V427.9M289.5 411.3V428.7M290.5 413.2V427.2M291.5 411.7V428.1M292.5 412.6V429.2M293.5 413.6V427.6M294.5 414.0V426.7M295.5 414.4V428.1M296.5 413.0V428.8M297.5 414.5V429.4M298.5 413.6V429.0M299.5 413.0V429.2M300.5 413.0V429.3M301.5 413.2V427.9M302.5 414.3V428.8M303.5 413.6V427.9M304.5 412.4V427.6M305.5 414.2V428.2M306.5 415.4V427.4M307.5 414.6V427.4M308.5 413.6V427.0M309.5 413.4V427.4M310.5 414.4V427.9M311.5 413.5V428.0M312.5 412.4V428.0M313.5 414.1V428.4M314.5 414.7V432.3M315.5 413.5V429.0M316.5 414.2V428.6M317.5 414.8V427.4M318.5 415.2V426.3M319.5 413.3V426.2M320.5 411.9V426.7M321.5 409.5V426.0M322.5 412.0V425.7M323.5 411.9V427.1M324.5 413.2V425.7M325.5 412.7V425.3M326.5 413.8V424.9M327.5 414.6V426.6M328.5 414.3V425.6M329.5 413.2V425.8M330.5 409.6V426.0M331.5 412.5V427.6M332.5 413.4V427.5M333.5 415.0V429.1M334.5 414.2V428.1M335.5 413.6V427.1M336.5 414.0V426.5M337.5 414.8V427.7M338.5 414.3V427.4M339.5 414.8V426.8M340.5 413.9V426.3M341.5 414.7V426.3M342.5 414.9V427.4M343.5 413.5V426.2M344.5 412.0V427.8M345.5 412.7V428.5M346.5 413.0V427.9M347.5 412.4V428.0M348.5 411.4V428.8M349.5 411.2V427.4M350.5 410.6V428.3M351.5 411.7V426.7M352.5 411.7V427.0M353.5 413.6V426.9M354.5 414.3V426.8M355.5 412.4V426.9M356.5 413.9V425.5M357.5 412.2V428.7M358.5 413.7V426.9M359.5 413.1V428.2M360.5 413.5V428.1M361.5 414.1V427.9M362.5 413.0V430.8M363.5 413.7V429.1M364.5 414.6V429.1M365.5 411.3V428.7M366.5 412.8V426.2M367.5 413.8V425.4M368.5 412.2V427.3M369.5 411.9V426.7M370.5 411.4V426.1M371.5 411.7V426.8M372.5 410.8V426.5M373.5 411.8V426.6M374.5 411.1V429.3M375.5 412.0V426.7M376.5 411.5V428.2M377.5 410.0V428.0M378.5 410.7V427.6M379.5 412.2V429.0M380.5 413.2V427.5M381.5 413.3V429.3M382.5 413.7V427.4M383.5 412.4V427.6M384.5 412.5V426.6M385.5 413.7V426.3M386.5 413.0V426.8M387.5 413.6V425.1M388.5 413.2V425.2M389.5 412.9V426.7M390.5 413.6V425.1M391.5 411.7V425.5M392.5 411.8V425.3M393.5 413.6V426.2M394.5 413.9V425.0M395.5 413.3V426.2M396.5 413.0V425.8M397.5 412.1V425.7M398.5 413.3V427.2M399.5 411.9V427.4M400.5 412.9V426.6M401.5 412.7V427.6M402.5 412.8V426.1M403.5 413.7V426.7M404.5 413.5V426.9M405.5 412.6V427.8M406.5 413.1V427.7M407.5 412.4V428.9M408.5 412.0V429.3M409.5 410.9V428.9M410.5 411.5V428.4M411.5 411.6V427.6M412.5 410.7V430.0M413.5 413.5V428.3M414.5 412.8V427.8M415.5 413.0V426.8M416.5 413.0V428.9M417.5 412.8V429.3M418.5 414.3V429.9M419.5 414.1V429.2M420.5 412.9V429.3M421.5 412.6V429.1M422.5 412.8V429.3M423.5 411.2V427.2M424.5 412.1V428.2M425.5 413.6V427.6M426.5 413.7V427.2M427.5 413.5V428.4M428.5 411.7V429.8M429.5 411.8V430.7M430.5 411.9V428.4M431.5 411.8V428.1M432.5 413.3V427.3M433.5 413.6V426.6M434.5 413.3V426.9M435.5 411.6V426.8M436.5 412.8V427.7M437.5 412.4V425.5M438.5 411.7V425.9M439.5 413.3V427.1M440.5 413.0V427.3M441.5 414.2V428.8M442.5 414.1V428.3M443.5 413.2V428.2M444.5 413.3V428.0M445.5 413.4V428.7M446.5 413.3V426.6M447.5 412.5V427.4M448.5 414.2V427.4M449.5 413.6V428.3M450.5 413.5V427.5M451.5 413.6V428.0M452.5 413.0V428.9M453.5 411.7V428.9M454.5 412.9V427.2M455.5 414.3V428.2M456.5 414.2V427.5M457.5 413.3V428.4M458.5 413.7V429.9M459.5 413.8V429.3M460.5 414.1V430.4M461.5 414.4V428.0M462.5 412.1V428.8M463.5 413.7V428.3M464.5 412.9V427.3M465.5 411.5V427.3M466.5 411.5V426.3M467.5 412.1V427.5M468.5 412.4V427.3M469.5 412.5V426.7M470.5 411.3V426.4M471.5 412.3V426.6M472.5 410.7V427.8M473.5 412.0V426.8M474.5 411.4V426.7M475.5 411.7V428.3M476.5 410.7V427.6M477.5 410.6V428.1M478.5 410.1V428.7M479.5 410.0V428.1M480.5 406.9V427.5M481.5 409.7V428.1M482.5 410.3V428.0M483.5 411.5V427.6M484.5 411.1V426.2M485.5 412.4V426.0M486.5 412.3V427.1M487.5 412.4V425.2M488.5 411.9V426.0M489.5 411.5V426.1M490.5 412.8V427.0M491.5 411.0V425.1M492.5 412.0V425.8M493.5 412.4V427.3M494.5 412.5V425.8M495.5 413.1V426.4M496.5 413.7V426.2M497.5 412.6V426.8M498.5 413.1V427.9M499.5 409.7V427.9M500.5 412.3V427.7M501.5 411.4V426.5M502.5 412.2V428.1M503.5 412.0V427.1M504.5 412.4V426.9M505.5 413.1V427.5M506.5 412.4V428.1M507.5 412.9V430.0M508.5 412.5V429.3M509.5 412.3V428.2M510.5 411.5V427.4M511.5 413.6V425.9M512.5 413.2V427.1M513.5 412.2V428.3M514.5 411.8V426.5M515.5 413.2V426.5M516.5 412.8V426.0M517.5 413.6V426.0M518.5 412.3V426.6M519.5 413.8V428.9M520.5 412.7V428.0M521.5 411.6V426.9M522.5 412.7V426.2M523.5 412.6V425.7M524.5 413.6V427.8M525.5 413.4V427.4M526.5 412.7V428.4M527.5 413.3V430.7M528.5 412.9V427.9M529.5 412.4V427.5M530.5 412.1V428.1M531.5 412.4V429.5M532.5 413.6V427.2M533.5 414.0V424.9M534.5 414.1V425.6M535.5 413.9V425.5M536.5 413.7V425.7M537.5 412.0V424.9M538.5 411.9V426.0M539.5 412.9V427.0M540.5 412.8V426.5M541.5 414.2V425.5M542.5 413.5V425.0M543.5 414.5V426.1M544.5 413.3V426.3M545.5 413.5V424.9M546.5 413.1V425.8M547.5 414.1V424.9M548.5 414.0V428.0M549.5 413.7V427.1M550.5 413.2V425.8M551.5 412.0V427.6M552.5 412.8V428.7M553.5 411.9V428.4M554.5 413.6V427.0M555.5 415.2V427.1M556.5 413.4V426.9M557.5 413.4V428.6M558.5 413.3V428.5M559.5 412.8V427.8M560.5 413.4V427.8M561.5 412.1V426.7M562.5 411.3V426.5M563.5 412.6V427.7M564.5 411.7V428.2M565.5 412.4V427.0M566.5 411.7V426.3M567.5 410.2V425.3M568.5 410.7V426.2M569.5 412.5V428.3M570.5 412.1V427.7M571.5 410.2V427.1M572.5 412.4V424.7M573.5 412.2V426.2M574.5 411.8V424.8M575.5 413.2V426.0M576.5 412.4V428.1M577.5 412.8V426.3M578.5 412.1V426.4M579.5 411.4V425.2M580.5 412.4V426.0M581.5 411.3V426.2M582.5 411.7V427.3M583.5 411.6V427.1M584.5 413.1V426.8M585.5 413.5V426.3M586.5 411.7V427.3M587.5 411.5V425.6M588.5 412.9V425.4M589.5 411.9V426.4M590.5 413.1V428.0M591.5 413.5V428.2M592.5 413.4V429.6M593.5 410.4V426.1M594.5 410.1V425.8M595.5 411.2V427.0M596.5 411.0V425.9M597.5 409.5V426.0M598.5 409.6V426.3M599.5 409.5V426.1M600.5 409.2V427.4M601.5 410.2V425.8M602.5 411.6V426.0M603.5 413.4V426.3M604.5 410.6V427.3M605.5 410.8V427.6M606.5 411.7V426.7M607.5 412.1V426.7M608.5 414.2V427.1M609.5 413.7V426.8M610.5 413.3V426.4M611.5 412.3V426.4M612.5 410.8V427.2M613.5 411.4V426.8M614.5 412.4V427.6M615.5 412.4V427.4M616.5 411.9V426.1M617.5 411.8V426.8M618.5 412.2V426.4M619.5 412.5V425.0M620.5 413.1V425.7M621.5 413.7V426.1M622.5 413.1V426.0M623.5 411.6V427.1M624.5 412.7V426.2M625.5 409.4V426.4M626.5 409.8V428.6M627.5 411.3V429.5M628.5 410.8V429.0M629.5 411.3V427.8M630.5 410.8V427.4M631.5 410.5V428.9M632.5 409.6V427.8M633.5 409.9V426.6M634.5 411.8V428.0M635.5 412.6V427.4M636.5 412.6V426.9M637.5 412.5V427.8M638.5 412.4V426.1M639.5 408.4V427.1M640.5 411.7V427.2M641.5 413.0V426.6M642.5 413.5V428.4M643.5 413.8V426.3M644.5 411.3V426.3M645.5 411.4V426.5M646.5 413.3V428.6M647.5 414.6V427.7M648.5 415.5V426.6M649.5 414.9V427.5M650.5 413.6V426.2M651.5 415.0V426.6M652.5 415.1V426.1M653.5 413.1V426.3M654.5 413.6V426.7M655.5 414.3V426.6M656.5 413.5V428.1M657.5 415.5V429.9M658.5 414.4V429.0M659.5 413.8V429.7M660.5 414.3V427.9M661.5 412.7V428.1M662.5 413.2V427.8M663.5 413.3V426.0M664.5 414.2V427.5M665.5 412.8V427.4M666.5 411.9V427.6M667.5 413.3V428.5M668.5 411.3V426.4M669.5 410.7V426.4M670.5 412.5V426.8M671.5 412.1V427.5M672.5 409.9V427.5M673.5 411.0V427.5M674.5 409.7V427.9M675.5 408.5V428.0M676.5 410.0V426.7M677.5 411.9V426.9M678.5 413.1V426.5M679.5 412.4V427.8M680.5 410.9V427.2M681.5 411.0V426.9M682.5 409.6V426.9M683.5 412.5V428.0M684.5 413.1V430.0M685.5 414.5V428.3M686.5 413.4V427.5M687.5 413.1V429.3M688.5 413.6V427.3M689.5 413.3V428.5M690.5 412.3V427.2M691.5 412.2V427.0M692.5 412.8V428.2M693.5 414.2V427.7M694.5 412.9V426.8M695.5 411.6V428.8M696.5 412.5V429.5M697.5 411.6V429.1M698.5 412.4V428.4M699.5 412.3V427.1M700.5 411.4V427.0M701.5 410.9V431.2M702.5 412.1V430.8M703.5 412.6V430.0M704.5 410.9V428.0M705.5 411.1V428.3M706.5 410.5V428.6M707.5 411.8V428.0M708.5 413.3V428.8M709.5 413.4V428.6M710.5 412.5V428.1M711.5 413.2V427.3M712.5 414.0V427.7M713.5 414.5V428.0M714.5 413.6V429.1M715.5 413.2V427.4M716.5 411.5V426.5M717.5 412.5V427.2M718.5 410.9V426.0M719.5 411.5V426.7M720.5 412.2V426.3M721.5 412.6V427.2M722.5 414.4V425.9M723.5 415.0V426.9M724.5 413.9V426.9M725.5 412.8V426.8M726.5 412.3V427.4M727.5 413.1V427.4M728.5 412.1V426.5M729.5 411.1V426.5M730.5 411.4V426.9M731.5 412.5V425.8M732.5 413.9V425.5M733.5 413.5V425.8M734.5 412.4V426.0M735.5 414.0V426.2M736.5 413.8V426.1M737.5 413.3V427.0M738.5 412.6V427.6M739.5 413.5V427.6M740.5 412.2V426.5M741.5 412.5V426.5M742.5 410.0V425.0M743.5 413.6V424.9M744.5 412.0V424.6M745.5 411.7V426.0M746.5 412.0V425.5M747.5 411.4V426.2M748.5 413.2V426.6M749.5 413.2V426.9M750.5 412.8V427.7M751.5 413.0V426.2M752.5 412.5V426.2M753.5 409.7V427.0M754.5 410.7V427.1M755.5 411.4V426.9M756.5 412.4V426.9M757.5 412.8V428.0M758.5 412.9V426.9M759.5 412.7V426.6M760.5 412.4V426.2M761.5 411.9V428.0M762.5 412.1V429.9M763.5 413.2V428.8M764.5 413.0V428.3M765.5 412.6V426.7M766.5 413.7V426.5M767.5 413.0V426.7M768.5 414.1V427.6M769.5 414.1V426.9M770.5 413.2V428.2M771.5 412.3V428.1M772.5 413.1V428.5M773.5 414.1V427.9M774.5 414.7V427.9M775.5 414.9V428.1M776.5 413.6V429.1M777.5 413.9V428.5M778.5 414.1V428.2M779.5 414.6V427.2M780.5 413.3V429.0M781.5 414.6V426.5M782.5 412.0V426.1M783.5 411.8V427.3M784.5 412.3V425.8M785.5 412.0V427.6M786.5 412.5V426.3M787.5 412.3V425.5M788.5 413.3V426.3M789.5 414.2V425.9M790.5 413.3V425.2M791.5 413.9V427.0M792.5 412.7V426.1M793.5 413.4V425.9M794.5 414.3V426.7M795.5 414.9V428.0M796.5 412.9V428.5M797.5 412.6V429.9M798.5 412.2V429.1M799.5 412.8V428.5M800.5 411.5V427.4M801.5 411.3V427.2M802.5 411.4V427.6M803.5 410.9V427.6M804.5 411.1V426.1M805.5 409.5V426.2M806.5 412.4V427.3M807.5 412.1V426.4M808.5 412.5V425.4M809.5 413.2V425.7M810.5 411.7V426.7M811.5 412.5V425.9M812.5 412.5V425.4M813.5 413.0V426.1M814.5 411.6V426.8M815.5 411.6V426.8M816.5 412.8V426.7M817.5 412.0V427.4M818.5 410.9V426.7M819.5 410.6V428.9M820.5 410.7V427.2M821.5 413.1V426.3M822.5 412.1V427.0M823.5 413.1V426.6M824.5 413.2V428.8M825.5 411.3V427.2M826.5 413.0V426.9M827.5 414.7V426.2M828.5 413.5V427.0M829.5 414.6V427.9M830.5 414.1V428.4M831.5 415.2V428.9M832.5 414.8V430.5M833.5 413.8V428.7M834.5 413.8V428.9M835.5 414.9V429.4M836.5 413.2V429.9M837.5 412.2V428.3M838.5 413.2V427.8M839.5 414.1V426.5M840.5 413.3V426.0M841.5 415.1V426.9M842.5 413.6V428.0M843.5 414.6V427.8M844.5 414.2V427.5M845.5 412.9V427.9M846.5 411.1V428.4M847.5 414.6V428.7M848.5 414.2V427.7M849.5 414.5V427.1M850.5 414.1V426.7M851.5 413.1V427.5M852.5 412.3V426.5M853.5 414.2V426.1M854.5 413.8V427.2M855.5 415.4V429.6M856.5 414.8V427.5M857.5 413.1V426.9M858.5 412.3V425.7M859.5 413.2V427.6M860.5 414.4V428.0M861.5 415.3V427.3M862.5 415.5V429.0M863.5 415.2V429.4M864.5 415.4V430.0M865.5 415.4V428.8M866.5 413.7V427.8M867.5 414.6V427.5M868.5 413.3V428.1M869.5 414.8V427.7M870.5 413.7V428.2M871.5 414.9V427.9M872.5 414.9V430.7M873.5 413.5V429.5M874.5 413.9V428.2M875.5 413.3V426.0M876.5 413.0V427.3M877.5 414.5V426.4M878.5 413.6V426.8M879.5 412.0V429.5M880.5 412.4V428.6M881.5 413.8V427.1M882.5 413.2V427.4M883.5 412.7V426.8M884.5 412.7V425.9M885.5 413.7V425.6M886.5 413.9V425.0M887.5 412.6V424.8M888.5 412.0V425.7M889.5 411.4V426.3M890.5 415.7V423.0M891.5 416.5V422.9M909.5 417.0V422.9M910.5 417.4V422.1M911.5 418.4V421.6M912.5 419.0V420.9M921.5 417.9V423.4M922.5 417.7V423.2M923.5 417.0V423.5M924.5 417.1V423.3M925.5 416.5V423.4M926.5 417.2V422.8M927.5 417.2V423.2M928.5 417.4V422.7M929.5 416.6V422.8M930.5 416.6V423.4M931.5 416.5V423.0M932.5 417.2V422.7M933.5 416.2V422.6M934.5 417.0V422.9M935.5 418.1V423.4M936.5 418.1V423.6M937.5 418.0V423.6M938.5 418.1V423.5M939.5 417.6V423.7M940.5 417.5V423.2M941.5 417.5V423.7M942.5 417.3V422.9M943.5 417.5V422.7M944.5 416.6V423.5M945.5 417.6V422.2M946.5 417.7V422.2M947.5 417.5V421.8M948.5 417.3V421.9M949.5 417.6V421.7M950.5 416.6V422.7M951.5 417.0V422.5M952.5 416.8V422.1M953.5 417.2V422.2M954.5 417.5V422.3M955.5 417.3V422.1M956.5 417.2V422.3M957.5 417.4V422.9M958.5 417.4V422.8M959.5 417.6V421.8M960.5 417.7V422.3M961.5 418.0V422.3M962.5 418.0V422.5M963.5 417.7V423.0M964.5 417.5V422.6M965.5 417.8V422.8M966.5 417.2V423.1M967.5 417.5V422.7M968.5 417.4V422.4M969.5 417.7V421.8M970.5 418.0V422.2M971.5 417.2V422.1M972.5 417.6V422.5M973.5 417.7V422.6M974.5 417.3V422.4M975.5 417.1V422.3M976.5 417.0V422.2M977.5 416.7V422.4M978.5 416.2V421.9M979.5 416.4V422.2M980.5 416.7V422.6M981.5 416.7V421.9M982.5 417.0V423.0M983.5 418.0V422.8M984.5 418.1V423.3M985.5 417.4V423.5M986.5 417.9V423.2M987.5 417.7V423.4M988.5 417.8V423.3M989.5 417.1V423.1M990.5 417.3V422.9M991.5 417.7V422.6M992.5 417.8V422.8M993.5 417.4V422.7M994.5 417.2V422.9M995.5 417.0V423.1M996.5 417.1V422.9M997.5 417.8V422.9M998.5 417.3V423.2M999.5 418.1V423.4M1000.5 417.7V422.9M1001.5 417.5V423.2M1002.5 417.4V422.9M1003.5 417.4V423.0M1004.5 416.8V422.6M1005.5 417.9V423.2M1006.5 417.5V423.0M1007.5 417.4V423.4M1008.5 417.4V423.1M1009.5 417.4V423.0M1010.5 417.4V422.6M1011.5 417.7V422.4M1012.5 417.7V422.3M1013.5 417.5V422.1M1014.5 417.3V422.0M1015.5 417.5V422.1M1016.5 417.5V422.3M1017.5 417.7V422.3M1018.5 417.1V422.5M1019.5 417.3V422.3M1020.5 418.0V422.4M1021.5 418.0V422.3M1022.5 417.8V422.9M1023.5 418.0V422.5M1024.5 417.7V423.1M1025.5 417.6V422.8M1026.5 417.1V423.0M1027.5 417.5V422.7M1028.5 417.1V422.6M1029.5 416.9V422.6M1030.5 416.3V422.2M1031.5 416.3V422.7M1032.5 416.1V422.7M1033.5 416.6V422.6M1034.5 416.2V422.4M1035.5 416.0V422.4M1036.5 416.5V422.3M1037.5 416.8V422.6M1038.5 415.5V423.8M1039.5 415.7V423.5M1040.5 415.6V423.2M1041.5 416.0V423.1M1042.5 415.3V423.8M1043.5 415.1V424.0M1044.5 413.5V423.6M1045.5 414.8V423.7M1046.5 415.0V423.5M1047.5 415.4V423.3M1048.5 415.0V422.9M1049.5 415.0V424.2M1050.5 414.9V423.8M1051.5 415.0V423.4M1052.5 416.0V423.3M1053.5 415.3V422.6M1054.5 416.2V423.1M1055.5 415.8V424.2M1056.5 415.5V425.1M1057.5 415.1V424.3M1058.5 416.0V424.7M1059.5 416.1V424.1M1060.5 415.4V424.7M1061.5 416.1V424.7M1062.5 416.2V424.4M1063.5 415.7V424.1M1064.5 415.5V424.6M1065.5 416.4V424.2M1066.5 416.1V424.3M1067.5 416.9V424.2M1068.5 416.2V425.2M1069.5 416.4V424.9M1070.5 414.7V428.5M1071.5 414.2V426.7M1072.5 414.1V426.0M1073.5 413.5V427.1M1074.5 413.4V428.0M1075.5 413.8V426.1M1076.5 412.7V428.5M1077.5 413.8V426.5M1078.5 413.6V426.4M1079.5 413.6V425.8M1080.5 413.7V424.9M1081.5 414.1V426.6M1082.5 412.8V427.0M1083.5 413.2V427.6M1084.5 412.5V427.0M1085.5 414.0V426.4M1086.5 414.6V426.5M1087.5 415.6V426.2M1088.5 414.9V426.7M1089.5 415.1V427.5M1090.5 414.8V426.5M1091.5 415.6V426.6M1092.5 415.4V425.6M1093.5 416.2V425.9M1094.5 414.7V425.0M1095.5 414.3V426.0M1096.5 414.9V424.9M1097.5 415.4V425.9M1098.5 413.8V426.1M1099.5 415.0V426.4M1100.5 413.9V425.9M1101.5 413.9V427.1M1102.5 415.6V424.2M1103.5 416.4V423.9M1104.5 415.7V423.8M1105.5 416.2V423.3M1106.5 416.2V423.5M1107.5 416.5V423.5M1108.5 415.6V422.9M1109.5 416.0V423.7M1110.5 416.2V423.5M1111.5 416.0V422.9M1112.5 415.6V423.6M1113.5 416.4V424.1M1114.5 415.8V423.8M1115.5 416.1V423.5M1116.5 416.0V423.4M1117.5 416.7V423.3M1118.5 415.9V423.0M1119.5 416.0V423.2M1120.5 416.6V423.4M1121.5 416.1V423.2M1122.5 415.8V423.9M1123.5 416.4V424.2M1124.5 415.7V424.4M1125.5 415.3V424.1M1126.5 415.5V424.2M1127.5 415.2V424.0M1128.5 415.4V424.0M1129.5 416.5V423.9M1130.5 417.0V423.5M1131.5 415.9V423.2M1132.5 416.3V423.6M1133.5 416.1V423.3M1134.5 415.6V423.2M1135.5 415.4V423.6M1136.5 416.4V423.1M1137.5 416.0V422.7M1138.5 416.3V423.4M1139.5 415.9V423.0M1140.5 416.0V423.7M1141.5 416.5V422.8M1142.5 416.3V422.5M1143.5 416.5V423.3M1144.5 416.2V422.9M1145.5 417.0V422.6M1146.5 416.7V423.2M1147.5 417.0V422.6M1148.5 416.1V423.5M1149.5 416.1V423.0M1150.5 413.3V423.9M1151.5 414.7V424.3M1152.5 414.2V425.0M1153.5 414.2V425.2M1154.5 414.4V424.6M1155.5 413.8V425.2M1156.5 414.7V424.1M1157.5 413.9V423.9M1158.5 413.7V424.0M1159.5 414.0V424.7M1160.5 414.6V425.3M1161.5 414.3V424.9M1162.5 414.8V424.6M1163.5 415.8V424.6M1164.5 415.9V424.7M1165.5 416.1V424.4M1166.5 414.9V424.1M1167.5 415.8V424.4M1168.5 416.4V424.6M1169.5 416.2V425.0M1170.5 415.2V425.8M1171.5 416.0V424.4M1172.5 413.6V426.2M1173.5 414.2V426.1M1174.5 414.4V427.6M1175.5 413.9V426.4M1176.5 414.0V427.1M1177.5 414.4V426.2M1178.5 414.2V426.1M1179.5 414.6V425.6M1180.5 415.1V425.6M1181.5 414.9V426.5M1182.5 413.8V426.9M1183.5 414.6V428.0M1184.5 413.3V427.1M1185.5 414.0V428.3M1186.5 412.2V427.6M1187.5 412.6V426.8M1188.5 413.5V427.0M1189.5 412.3V426.1M1190.5 413.4V426.4M1191.5 413.7V427.1M1192.5 413.4V427.3M1193.5 411.2V425.7M1194.5 410.6V424.9M1195.5 411.5V426.7M1196.5 412.3V426.1M1197.5 413.0V426.3M1198.5 413.1V428.3M1199.5 413.3V425.6M1200.5 414.1V425.9M1201.5 412.9V426.4M1202.5 413.1V427.3M1203.5 412.4V428.7M1204.5 413.4V427.5M1205.5 412.1V428.5M1206.5 413.3V427.5M1207.5 412.7V430.1M1208.5 412.8V429.6M1209.5 412.8V430.2M1210.5 412.8V430.0M1211.5 413.6V427.5M1212.5 415.2V425.6M1213.5 414.2V425.0M1214.5 414.8V425.0M1215.5 415.4V424.5M1216.5 416.4V423.6M1217.5 417.7V421.9" stroke="#3232c8" stroke-width="1"/><path d="M147.5 418.0V422.0M148.5 418.0V422.0M149.5 417.8V422.2M150.5 418.1V421.9M151.5 417.9V422.1M152.5 417.9V422.1M153.5 418.1V421.9M154.5 417.7V422.3M155.5 417.3V422.7M156.5 417.0V423.0M157.5 416.7V423.3M158.5 416.8V423.2M159.5 417.2V422.8M160.5 416.9V423.1M161.5 416.7V423.3M162.5 416.7V423.3M163.5 417.2V422.8M164.5 417.6V422.4M165.5 418.2V421.8M166.5 417.6V422.4M167.5 418.4V421.6M168.5 418.4V421.6M169.5 418.5V421.5M170.5 418.4V421.6M171.5 417.5V422.5M172.5 417.2V422.8M173.5 417.4V422.6M174.5 417.2V422.8M175.5 417.1V422.9M176.5 417.6V422.4M177.5 417.4V422.6M178.5 417.6V422.4M179.5 416.8V423.2M180.5 416.6V423.4M181.5 417.2V422.8M182.5 417.6V422.4M183.5 418.0V422.0M184.5 418.0V422.0M185.5 417.4V422.6M186.5 417.4V422.6M187.5 417.3V422.7M188.5 417.0V423.0M189.5 417.3V422.7M190.5 417.1V422.9M191.5 416.8V423.2M192.5 416.8V423.2M193.5 417.0V423.0M194.5 417.0V423.0M195.5 417.0V423.0M196.5 416.9V423.1M197.5 417.1V422.9M198.5 417.1V422.9M199.5 417.3V422.7M200.5 417.1V422.9M201.5 416.9V423.1M202.5 417.0V423.0M203.5 417.0V423.0M204.5 416.8V423.2M205.5 417.0V423.0M206.5 417.2V422.8M207.5 417.7V422.3M208.5 417.7V422.3M209.5 417.0V423.0M210.5 417.3V422.7M211.5 417.1V422.9M212.5 416.8V423.2M213.5 417.0V423.0M214.5 416.7V423.3M215.5 417.0V423.0M216.5 417.0V423.0M217.5 417.3V422.7M218.5 417.4V422.6M219.5 417.3V422.7M220.5 417.4V422.6M221.5 417.2V422.8M222.5 417.1V422.9M223.5 417.2V422.8M224.5 417.2V422.8M225.5 416.8V423.2M226.5 416.8V423.2M227.5 417.3V422.7M228.5 417.5V422.5M229.5 417.1V422.9M230.5 417.1V422.9M231.5 417.1V422.9M232.5 417.4V422.6M233.5 417.4V422.6M234.5 417.5V422.5M235.5 417.3V422.7M236.5 417.1V422.9M237.5 417.1V422.9M238.5 417.2V422.8M239.5 417.3V422.7M240.5 417.4V422.6M241.5 417.5V422.5M242.5 418.0V422.0M243.5 418.0V422.0M244.5 417.9V422.1M245.5 417.2V422.8M246.5 417.3V422.7M247.5 417.2V422.8M248.5 417.0V423.0M249.5 416.7V423.3M250.5 416.8V423.2M251.5 416.8V423.2M252.5 416.8V423.2M253.5 417.1V422.9M254.5 417.0V423.0M255.5 416.8V423.2M256.5 417.3V422.7M257.5 417.4V422.6M258.5 417.5V422.5M259.5 417.4V422.6M260.5 417.2V422.8M261.5 417.1V422.9M262.5 416.9V423.1M263.5 417.2V422.8M264.5 417.1V422.9M265.5 417.1V422.9M266.5 417.4V422.6M267.5 417.7V422.3M268.5 417.2V422.8M269.5 416.9V423.1M270.5 417.0V423.0M271.5 417.3V422.7M272.5 417.4V422.6M273.5 418.0V422.0M274.5 417.8V422.2M275.5 417.4V422.6M276.5 417.3V422.7M277.5 417.0V423.0M278.5 417.8V422.2M279.5 418.0V422.0M280.5 417.7V422.3M281.5 417.5V422.5M282.5 417.3V422.7M283.5 417.3V422.7M284.5 417.3V422.7M285.5 417.2V422.8M286.5 417.3V422.7M287.5 417.8V422.2M288.5 417.8V422.2M289.5 417.6V422.4M290.5 417.2V422.8M291.5 417.0V423.0M292.5 417.2V422.8M293.5 417.5V422.5M294.5 417.6V422.4M295.5 417.5V422.5M296.5 417.3V422.7M297.5 417.5V422.5M298.5 417.0V423.0M299.5 417.1V422.9M300.5 417.0V423.0M301.5 417.0V423.0M302.5 417.6V422.4M303.5 417.5V422.5M304.5 417.6V422.4M305.5 418.1V421.9M306.5 417.8V422.2M307.5 418.1V421.9M308.5 417.5V422.5M309.5 417.7V422.3M310.5 417.5V422.5M311.5 417.5V422.5M312.5 417.2V422.8M313.5 417.3V422.7M314.5 417.6V422.4M315.5 417.8V422.2M316.5 417.7V422.3M317.5 418.0V422.0M318.5 417.8V422.2M319.5 417.8V422.2M320.5 416.9V423.1M321.5 417.1V422.9M322.5 417.2V422.8M323.5 417.0V423.0M324.5 417.4V422.6M325.5 417.3V422.7M326.5 417.6V422.4M327.5 417.6V422.4M328.5 417.1V422.9M329.5 417.2V422.8M330.5 416.9V423.1M331.5 417.1V422.9M332.5 417.4V422.6M333.5 417.5V422.5M334.5 417.6V422.4M335.5 417.2V422.8M336.5 417.3V422.7M337.5 417.4V422.6M338.5 417.6V422.4M339.5 417.8V422.2M340.5 417.7V422.3M341.5 417.4V422.6M342.5 417.4V422.6M343.5 417.1V422.9M344.5 417.0V423.0M345.5 417.1V422.9M346.5 417.1V422.9M347.5 417.0V423.0M348.5 416.7V423.3M349.5 416.8V423.2M350.5 416.7V423.3M351.5 417.0V423.0M352.5 417.1V422.9M353.5 417.3V422.7M354.5 417.7V422.3M355.5 417.4V422.6M356.5 417.2V422.8M357.5 417.3V422.7M358.5 417.5V422.5M359.5 417.5V422.5M360.5 417.7V422.3M361.5 417.4V422.6M362.5 417.8V422.2M363.5 417.6V422.4M364.5 417.9V422.1M365.5 417.3V422.7M366.5 417.2V422.8M367.5 417.1V422.9M368.5 416.9V423.1M369.5 416.9V423.1M370.5 417.1V422.9M371.5 417.1V422.9M372.5 416.8V423.2M373.5 416.9V423.1M374.5 416.9V423.1M375.5 417.2V422.8M376.5 417.2V422.8M377.5 417.0V423.0M378.5 416.7V423.3M379.5 416.8V423.2M380.5 417.2V422.8M381.5 417.4V422.6M382.5 417.6V422.4M383.5 417.9V422.1M384.5 418.0V422.0M385.5 417.7V422.3M386.5 417.7V422.3M387.5 417.2V422.8M388.5 417.6V422.4M389.5 417.4V422.6M390.5 417.9V422.1M391.5 417.8V422.2M392.5 417.6V422.4M393.5 418.0V422.0M394.5 417.7V422.3M395.5 417.4V422.6M396.5 417.6V422.4M397.5 417.2V422.8M398.5 417.5V422.5M399.5 417.0V423.0M400.5 417.2V422.8M401.5 417.6V422.4M402.5 417.4V422.6M403.5 417.2V422.8M404.5 417.7V422.3M405.5 417.6V422.4M406.5 417.4V422.6M407.5 417.3V422.7M408.5 416.7V423.3M409.5 416.8V423.2M410.5 416.6V423.4M411.5 416.7V423.3M412.5 416.9V423.1M413.5 417.4V422.6M414.5 417.6V422.4M415.5 417.4V422.6M416.5 417.8V422.2M417.5 417.8V422.2M418.5 417.9V422.1M419.5 417.9V422.1M420.5 418.1V421.9M421.5 417.8V422.2M422.5 417.0V423.0M423.5 417.1V422.9M424.5 417.4V422.6M425.5 417.7V422.3M426.5 418.1V421.9M427.5 417.7V422.3M428.5 417.1V422.9M429.5 417.3V422.7M430.5 417.2V422.8M431.5 417.3V422.7M432.5 417.5V422.5M433.5 417.6V422.4M434.5 417.5V422.5M435.5 417.8V422.2M436.5 417.5V422.5M437.5 417.2V422.8M438.5 417.1V422.9M439.5 417.3V422.7M440.5 417.8V422.2M441.5 417.9V422.1M442.5 418.0V422.0M443.5 417.6V422.4M444.5 417.9V422.1M445.5 417.8V422.2M446.5 417.3V422.7M447.5 417.3V422.7M448.5 417.3V422.7M449.5 417.7V422.3M450.5 417.8V422.2M451.5 417.7V422.3M452.5 417.3V422.7M453.5 416.9V423.1M454.5 417.1V422.9M455.5 417.5V422.5M456.5 417.5V422.5M457.5 417.6V422.4M458.5 417.9V422.1M459.5 418.0V422.0M460.5 418.0V422.0M461.5 418.0V422.0M462.5 417.8V422.2M463.5 417.6V422.4M464.5 417.2V422.8M465.5 417.4V422.6M466.5 417.3V422.7M467.5 417.5V422.5M468.5 417.3V422.7M469.5 417.6V422.4M470.5 417.2V422.8M471.5 417.2V422.8M472.5 417.1V422.9M473.5 417.3V422.7M474.5 417.3V422.7M475.5 417.2V422.8M476.5 417.1V422.9M477.5 416.9V423.1M478.5 417.0V423.0M479.5 416.7V423.3M480.5 417.0V423.0M481.5 416.7V423.3M482.5 417.1V422.9M483.5 416.9V423.1M484.5 417.3V422.7M485.5 417.3V422.7M486.5 417.8V422.2M487.5 417.7V422.3M488.5 417.5V422.5M489.5 417.4V422.6M490.5 417.6V422.4M491.5 417.8V422.2M492.5 417.9V422.1M493.5 418.1V421.9M494.5 418.1V421.9M495.5 417.8V422.2M496.5 418.1V421.9M497.5 417.5V422.5M498.5 417.5V422.5M499.5 417.5V422.5M500.5 417.1V422.9M501.5 417.3V422.7M502.5 417.5V422.5M503.5 417.6V422.4M504.5 417.6V422.4M505.5 418.0V422.0M506.5 417.5V422.5M507.5 417.9V422.1M508.5 417.9V422.1M509.5 417.4V422.6M510.5 417.7V422.3M511.5 417.6V422.4M512.5 417.2V422.8M513.5 417.1V422.9M514.5 417.1V422.9M515.5 417.4V422.6M516.5 417.6V422.4M517.5 417.2V422.8M518.5 417.1V422.9M519.5 417.3V422.7M520.5 417.0V423.0M521.5 417.3V422.7M522.5 417.3V422.7M523.5 417.3V422.7M524.5 417.5V422.5M525.5 417.5V422.5M526.5 417.5V422.5M527.5 417.0V423.0M528.5 416.8V423.2M529.5 416.9V423.1M530.5 416.7V423.3M531.5 416.9V423.1M532.5 416.9V423.1M533.5 417.5V422.5M534.5 418.1V421.9M535.5 417.8V422.2M536.5 416.9V423.1M537.5 416.6V423.4M538.5 416.7V423.3M539.5 417.3V422.7M540.5 417.1V422.9M541.5 417.0V423.0M542.5 417.5V422.5M543.5 417.8V422.2M544.5 417.9V422.1M545.5 417.5V422.5M546.5 417.2V422.8M547.5 417.6V422.4M548.5 417.2V422.8M549.5 417.0V423.0M550.5 417.4V422.6M551.5 417.1V422.9M552.5 416.7V423.3M553.5 416.8V423.2M554.5 417.2V422.8M555.5 417.3V422.7M556.5 417.6V422.4M557.5 417.3V422.7M558.5 417.5V422.5M559.5 417.3V422.7M560.5 416.9V423.1M561.5 416.7V423.3M562.5 417.0V423.0M563.5 416.8V423.2M564.5 416.9V423.1M565.5 416.7V423.3M566.5 416.8V423.2M567.5 417.0V423.0M568.5 417.1V422.9M569.5 417.2V422.8M570.5 417.6V422.4M571.5 417.3V422.7M572.5 417.0V423.0M573.5 417.4V422.6M574.5 417.5V422.5M575.5 417.4V422.6M576.5 417.6V422.4M577.5 417.6V422.4M578.5 417.1V422.9M579.5 416.9V423.1M580.5 417.2V422.8M581.5 417.3V422.7M582.5 417.1V422.9M583.5 417.0V423.0M584.5 417.3V422.7M585.5 417.4V422.6M586.5 417.0V423.0M587.5 416.9V423.1M588.5 416.9V423.1M589.5 417.4V422.6M590.5 417.6V422.4M591.5 417.6V422.4M592.5 417.6V422.4M593.5 416.9V423.1M594.5 417.0V423.0M595.5 417.0V423.0M596.5 416.7V423.3M597.5 416.6V423.4M598.5 416.8V423.2M599.5 416.7V423.3M600.5 416.9V423.1M601.5 416.8V423.2M602.5 417.2V422.8M603.5 417.1V422.9M604.5 417.1V422.9M605.5 417.1V422.9M606.5 417.3V422.7M607.5 417.3V422.7M608.5 417.7V422.3M609.5 417.6V422.4M610.5 417.4V422.6M611.5 416.9V423.1M612.5 416.9V423.1M613.5 416.7V423.3M614.5 416.7V423.3M615.5 417.1V422.9M616.5 417.0V423.0M617.5 417.3V422.7M618.5 417.5V422.5M619.5 417.9V422.1M620.5 417.6V422.4M621.5 418.1V421.9M622.5 417.7V422.3M623.5 417.7V422.3M624.5 417.5V422.5M625.5 417.6V422.4M626.5 417.5V422.5M627.5 417.1V422.9M628.5 417.1V422.9M629.5 417.2V422.8M630.5 417.2V422.8M631.5 417.0V423.0M632.5 417.1V422.9M633.5 417.4V422.6M634.5 417.5V422.5M635.5 417.6V422.4M636.5 418.0V422.0M637.5 417.8V422.2M638.5 417.1V422.9M639.5 416.9V423.1M640.5 417.4V422.6M641.5 417.6V422.4M642.5 417.7V422.3M643.5 417.5V422.5M644.5 417.2V422.8M645.5 416.8V423.2M646.5 417.3V422.7M647.5 417.5V422.5M648.5 417.7V422.3M649.5 417.9V422.1M650.5 417.4V422.6M651.5 417.6V422.4M652.5 417.3V422.7M653.5 417.4V422.6M654.5 416.9V423.1M655.5 417.4V422.6M656.5 417.7V422.3M657.5 417.9V422.1M658.5 417.6V422.4M659.5 418.0V422.0M660.5 418.0V422.0M661.5 417.9V422.1M662.5 417.7V422.3M663.5 417.3V422.7M664.5 417.2V422.8M665.5 417.3V422.7M666.5 417.3V422.7M667.5 417.0V423.0M668.5 416.9V423.1M669.5 417.1V422.9M670.5 416.8V423.2M671.5 417.3V422.7M672.5 417.3V422.7M673.5 417.2V422.8M674.5 417.1V422.9M675.5 417.0V423.0M676.5 417.1V422.9M677.5 417.2V422.8M678.5 417.2V422.8M679.5 417.2V422.8M680.5 417.1V422.9M681.5 417.0V423.0M682.5 416.9V423.1M683.5 417.8V422.2M684.5 418.1V421.9M685.5 418.0V422.0M686.5 417.7V422.3M687.5 417.9V422.1M688.5 417.5V422.5M689.5 417.3V422.7M690.5 417.4V422.6M691.5 417.2V422.8M692.5 417.5V422.5M693.5 417.8V422.2M694.5 417.5V422.5M695.5 417.3V422.7M696.5 417.3V422.7M697.5 417.2V422.8M698.5 417.1V422.9M699.5 417.1V422.9M700.5 417.1V422.9M701.5 417.3V422.7M702.5 417.6V422.4M703.5 417.5V422.5M704.5 416.9V423.1M705.5 417.1V422.9M706.5 416.8V423.2M707.5 417.4V422.6M708.5 417.2V422.8M709.5 417.2V422.8M710.5 417.3V422.7M711.5 417.6V422.4M712.5 417.7V422.3M713.5 417.5V422.5M714.5 417.5V422.5M715.5 417.2V422.8M716.5 417.1V422.9M717.5 417.1V422.9M718.5 417.1V422.9M719.5 416.8V423.2M720.5 416.8V423.2M721.5 417.0V423.0M722.5 417.4V422.6M723.5 417.5V422.5M724.5 417.5V422.5M725.5 417.0V423.0M726.5 416.9V423.1M727.5 416.7V423.3M728.5 417.0V423.0M729.5 416.8V423.2M730.5 416.7V423.3M731.5 417.4V422.6M732.5 417.3V422.7M733.5 417.4V422.6M734.5 417.1V422.9M735.5 417.5V422.5M736.5 417.5V422.5M737.5 417.8V422.2M738.5 417.6V422.4M739.5 417.8V422.2M740.5 417.4V422.6M741.5 417.5V422.5M742.5 417.5V422.5M743.5 417.6V422.4M744.5 417.4V422.6M745.5 417.1V422.9M746.5 417.5V422.5M747.5 417.1V422.9M748.5 417.6V422.4M749.5 417.7V422.3M750.5 418.0V422.0M751.5 417.9V422.1M752.5 417.2V422.8M753.5 416.5V423.5M754.5 416.8V423.2M755.5 417.4V422.6M756.5 417.1V422.9M757.5 417.3V422.7M758.5 417.3V422.7M759.5 417.6V422.4M760.5 417.5V422.5M761.5 417.1V422.9M762.5 417.0V423.0M763.5 416.9V423.1M764.5 417.4V422.6M765.5 417.1V422.9M766.5 417.5V422.5M767.5 417.2V422.8M768.5 417.4V422.6M769.5 417.3V422.7M770.5 417.2V422.8M771.5 417.0V423.0M772.5 417.5V422.5M773.5 417.7V422.3M774.5 417.7V422.3M775.5 417.7V422.3M776.5 417.2V422.8M777.5 417.2V422.8M778.5 417.6V422.4M779.5 417.2V422.8M780.5 417.3V422.7M781.5 417.1V422.9M782.5 417.0V423.0M783.5 417.0V423.0M784.5 416.7V423.3M785.5 416.6V423.4M786.5 416.6V423.4M787.5 417.2V422.8M788.5 417.6V422.4M789.5 417.8V422.2M790.5 417.5V422.5M791.5 417.6V422.4M792.5 417.2V422.8M793.5 417.6V422.4M794.5 417.8V422.2M795.5 417.9V422.1M796.5 417.5V422.5M797.5 417.6V422.4M798.5 417.7V422.3M799.5 417.5V422.5M800.5 416.9V423.1M801.5 417.1V422.9M802.5 417.2V422.8M803.5 416.8V423.2M804.5 417.0V423.0M805.5 416.9V423.1M806.5 417.4V422.6M807.5 417.4V422.6M808.5 417.3V422.7M809.5 417.8V422.2M810.5 417.5V422.5M811.5 417.7V422.3M812.5 417.6V422.4M813.5 417.9V422.1M814.5 417.4V422.6M815.5 417.3V422.7M816.5 417.2V422.8M817.5 417.2V422.8M818.5 417.1V422.9M819.5 416.7V423.3M820.5 417.3V422.7M821.5 417.4V422.6M822.5 417.6V422.4M823.5 417.8V422.2M824.5 417.2V422.8M825.5 417.2V422.8M826.5 417.4V422.6M827.5 417.9V422.1M828.5 417.9V422.1M829.5 418.1V421.9M830.5 417.7V422.3M831.5 418.0V422.0M832.5 417.8V422.2M833.5 417.6V422.4M834.5 418.0V422.0M835.5 417.7V422.3M836.5 417.1V422.9M837.5 417.0V423.0M838.5 417.0V423.0M839.5 417.4V422.6M840.5 417.7V422.3M841.5 417.6V422.4M842.5 417.6V422.4M843.5 417.5V422.5M844.5 417.3V422.7M845.5 417.4V422.6M846.5 417.5V422.5M847.5 417.6V422.4M848.5 417.9V422.1M849.5 418.0V422.0M850.5 417.6V422.4M851.5 417.0V423.0M852.5 417.3V422.7M853.5 417.1V422.9M854.5 417.9V422.1M855.5 417.6V422.4M856.5 417.9V422.1M857.5 417.6V422.4M858.5 417.2V422.8M859.5 417.3V422.7M860.5 417.8V422.2M861.5 417.5V422.5M862.5 417.5V422.5M863.5 417.8V422.2M864.5 417.6V422.4M865.5 417.6V422.4M866.5 417.7V422.3M867.5 417.3V422.7M868.5 417.4V422.6M869.5 417.2V422.8M870.5 417.2V422.8M871.5 417.7V422.3M872.5 417.4V422.6M873.5 417.6V422.4M874.5 417.7V422.3M875.5 417.7V422.3M876.5 417.4V422.6M877.5 417.7V422.3M878.5 417.5V422.5M879.5 417.4V422.6M880.5 417.5V422.5M881.5 417.8V422.2M882.5 417.7V422.3M883.5 417.7V422.3M884.5 417.9V422.1M885.5 417.7V422.3M886.5 417.5V422.5M887.5 417.6V422.4M888.5 417.2V422.8M889.5 417.1V422.9M890.5 418.4V421.6M891.5 418.2V421.8M909.5 419.1V420.9M910.5 419.1V420.9M911.5 419.1V420.9M912.5 419.1V420.9M921.5 419.1V420.9M922.5 419.0V421.0M923.5 418.8V421.2M924.5 418.8V421.2M925.5 418.8V421.2M926.5 418.9V421.1M927.5 419.1V420.9M928.5 419.0V421.0M929.5 418.7V421.3M930.5 418.7V421.3M931.5 418.6V421.4M932.5 418.8V421.2M933.5 418.8V421.2M934.5 418.8V421.2M935.5 419.1V420.9M936.5 419.0V421.0M937.5 419.1V420.9M938.5 419.1V420.9M939.5 419.1V420.9M940.5 419.1V420.9M941.5 419.0V421.0M942.5 418.8V421.2M943.5 418.8V421.2M944.5 419.0V421.0M945.5 419.0V421.0M946.5 419.2V420.8M947.5 419.1V420.9M948.5 419.1V420.9M949.5 419.0V421.0M950.5 418.9V421.1M951.5 418.7V421.3M952.5 418.8V421.2M953.5 418.9V421.1M954.5 419.0V421.0M955.5 418.9V421.1M956.5 418.9V421.1M957.5 418.8V421.2M958.5 418.9V421.1M959.5 419.1V420.9M960.5 419.0V421.0M961.5 419.1V420.9M962.5 419.1V420.9M963.5 418.9V421.1M964.5 418.9V421.1M965.5 418.8V421.2M966.5 418.9V421.1M967.5 418.9V421.1M968.5 419.1V420.9M969.5 419.2V420.8M970.5 419.1V420.9M971.5 419.1V420.9M972.5 419.2V420.8M973.5 419.1V420.9M974.5 418.9V421.1M975.5 418.9V421.1M976.5 418.9V421.1M977.5 418.7V421.3M978.5 418.7V421.3M979.5 418.8V421.2M980.5 418.7V421.3M981.5 418.7V421.3M982.5 418.9V421.1M983.5 419.0V421.0M984.5 419.1V420.9M985.5 419.0V421.0M986.5 419.0V421.0M987.5 419.0V421.0M988.5 418.9V421.1M989.5 418.9V421.1M990.5 418.9V421.1M991.5 418.9V421.1M992.5 419.0V421.0M993.5 418.9V421.1M994.5 418.9V421.1M995.5 418.8V421.2M996.5 418.8V421.2M997.5 418.9V421.1M998.5 419.0V421.0M999.5 419.2V420.8M1000.5 419.1V420.9M1001.5 419.2V420.8M1002.5 419.2V420.8M1003.5 419.1V420.9M1004.5 419.1V420.9M1005.5 419.2V420.8M1006.5 419.2V420.8M1007.5 419.2V420.8M1008.5 419.1V420.9M1009.5 419.2V420.8M1010.5 419.0V421.0M1011.5 419.0V421.0M1012.5 419.0V421.0M1013.5 419.0V421.0M1014.5 419.0V421.0M1015.5 418.9V421.1M1016.5 419.0V421.0M1017.5 418.8V421.2M1018.5 419.0V421.0M1019.5 419.0V421.0M1020.5 419.1V420.9M1021.5 419.1V420.9M1022.5 419.1V420.9M1023.5 419.1V420.9M1024.5 419.2V420.8M1025.5 419.1V420.9M1026.5 419.1V420.9M1027.5 419.0V421.0M1028.5 418.9V421.1M1029.5 418.8V421.2M1030.5 418.7V421.3M1031.5 418.8V421.2M1032.5 418.8V421.2M1033.5 418.6V421.4M1034.5 418.7V421.3M1035.5 418.7V421.3M1036.5 418.9V421.1M1037.5 419.1V420.9M1038.5 418.5V421.5M1039.5 418.8V421.2M1040.5 418.7V421.3M1041.5 418.6V421.4M1042.5 418.4V421.6M1043.5 418.3V421.7M1044.5 418.0V422.0M1045.5 418.1V421.9M1046.5 418.1V421.9M1047.5 418.4V421.6M1048.5 418.3V421.7M1049.5 418.1V421.9M1050.5 418.1V421.9M1051.5 418.1V421.9M1052.5 418.4V421.6M1053.5 418.5V421.5M1054.5 418.5V421.5M1055.5 418.4V421.6M1056.5 418.4V421.6M1057.5 418.4V421.6M1058.5 418.3V421.7M1059.5 418.2V421.8M1060.5 418.3V421.7M1061.5 418.5V421.5M1062.5 418.3V421.7M1063.5 418.5V421.5M1064.5 418.2V421.8M1065.5 418.3V421.7M1066.5 418.4V421.6M1067.5 418.6V421.4M1068.5 418.7V421.3M1069.5 418.5V421.5M1070.5 417.8V422.2M1071.5 417.3V422.7M1072.5 417.3V422.7M1073.5 417.3V422.7M1074.5 417.4V422.6M1075.5 417.7V422.3M1076.5 417.8V422.2M1077.5 418.0V422.0M1078.5 417.8V422.2M1079.5 417.6V422.4M1080.5 417.7V422.3M1081.5 417.8V422.2M1082.5 417.3V422.7M1083.5 417.5V422.5M1084.5 417.7V422.3M1085.5 417.8V422.2M1086.5 417.6V422.4M1087.5 418.0V422.0M1088.5 417.9V422.1M1089.5 418.0V422.0M1090.5 418.1V421.9M1091.5 417.9V422.1M1092.5 418.1V421.9M1093.5 417.8V422.2M1094.5 417.9V422.1M1095.5 417.6V422.4M1096.5 417.7V422.3M1097.5 417.9V422.1M1098.5 418.3V421.7M1099.5 418.1V421.9M1100.5 417.5V422.5M1101.5 417.3V422.7M1102.5 418.4V421.6M1103.5 418.5V421.5M1104.5 418.4V421.6M1105.5 418.4V421.6M1106.5 418.5V421.5M1107.5 418.6V421.4M1108.5 418.6V421.4M1109.5 418.3V421.7M1110.5 418.4V421.6M1111.5 418.4V421.6M1112.5 418.5V421.5M1113.5 418.6V421.4M1114.5 418.6V421.4M1115.5 418.8V421.2M1116.5 418.6V421.4M1117.5 418.6V421.4M1118.5 418.7V421.3M1119.5 418.5V421.5M1120.5 418.5V421.5M1121.5 418.5V421.5M1122.5 418.5V421.5M1123.5 418.5V421.5M1124.5 418.5V421.5M1125.5 418.4V421.6M1126.5 418.4V421.6M1127.5 418.4V421.6M1128.5 418.4V421.6M1129.5 418.6V421.4M1130.5 418.8V421.2M1131.5 418.8V421.2M1132.5 418.8V421.2M1133.5 418.6V421.4M1134.5 418.4V421.6M1135.5 418.5V421.5M1136.5 418.4V421.6M1137.5 418.4V421.6M1138.5 418.5V421.5M1139.5 418.4V421.6M1140.5 418.4V421.6M1141.5 418.4V421.6M1142.5 418.5V421.5M1143.5 418.5V421.5M1144.5 418.5V421.5M1145.5 418.6V421.4M1146.5 418.6V421.4M1147.5 418.6V421.4M1148.5 418.5V421.5M1149.5 418.3V421.7M1150.5 417.9V422.1M1151.5 417.8V422.2M1152.5 417.9V422.1M1153.5 417.8V422.2M1154.5 417.8V422.2M1155.5 417.8V422.2M1156.5 418.1V421.9M1157.5 418.0V422.0M1158.5 417.8V422.2M1159.5 418.0V422.0M1160.5 418.0V422.0M1161.5 417.9V422.1M1162.5 417.9V422.1M1163.5 418.1V421.9M1164.5 418.2V421.8M1165.5 418.1V421.9M1166.5 418.0V422.0M1167.5 417.8V422.2M1168.5 417.9V422.1M1169.5 418.3V421.7M1170.5 418.4V421.6M1171.5 418.6V421.4M1172.5 417.7V422.3M1173.5 417.4V422.6M1174.5 417.3V422.7M1175.5 417.3V422.7M1176.5 417.5V422.5M1177.5 417.2V422.8M1178.5 417.6V422.4M1179.5 418.1V421.9M1180.5 417.9V422.1M1181.5 417.6V422.4M1182.5 417.4V422.6M1183.5 417.1V422.9M1184.5 417.3V422.7M1185.5 417.2V422.8M1186.5 416.9V423.1M1187.5 417.4V422.6M1188.5 417.2V422.8M1189.5 417.5V422.5M1190.5 417.2V422.8M1191.5 417.8V422.2M1192.5 417.6V422.4M1193.5 416.7V423.3M1194.5 416.9V423.1M1195.5 416.5V423.5M1196.5 416.9V423.1M1197.5 416.8V423.2M1198.5 417.0V423.0M1199.5 417.3V422.7M1200.5 417.3V422.7M1201.5 417.3V422.7M1202.5 417.4V422.6M1203.5 417.3V422.7M1204.5 416.9V423.1M1205.5 417.3V422.7M1206.5 417.3V422.7M1207.5 417.4V422.6M1208.5 417.1V422.9M1209.5 417.1V422.9M1210.5 418.0V422.0M1211.5 417.9V422.1M1212.5 417.9V422.1M1213.5 417.7V422.3M1214.5 417.4V422.6M1215.5 417.5V422.5M1216.5 417.4V422.6M1217.5 417.6V422.4" stroke="#6464dc" stroke-width="1"/></svg>
<div class="a" style="left:0px;top:760px;width:1280px;height:12px;background:#fbfbfb"></div>
<div class="a" style="left:0px;top:761px;width:136px;height:10px;background:#efefef"></div>
<div class="a" style="left:1267px;top:761px;width:13px;height:10px;background:#efefef"></div>
<div class="a" style="left:139px;top:763px;width:906px;height:6px;background:#a3a3a3;border-radius:3px"></div>
<div class="a" style="left:0px;top:771px;width:1280px;height:1px;background:#c4c4c4"></div>
<div class="a" style="left:0px;top:772px;width:1280px;height:84px;background:#f6f7fb"></div>
<svg style="left:3px;top:773px" width="7" height="82"><rect x="1" y="5" width="4" height="1" fill="#b4b4b8"/><rect x="1" y="9" width="4" height="1" fill="#b4b4b8"/><rect x="1" y="13" width="4" height="1" fill="#b4b4b8"/><rect x="1" y="17" width="4" height="1" fill="#b4b4b8"/><rect x="1" y="21" width="4" height="1" fill="#b4b4b8"/><rect x="1" y="25" width="4" height="1" fill="#b4b4b8"/><rect x="1" y="29" width="4" height="1" fill="#b4b4b8"/><rect x="1" y="33" width="4" height="1" fill="#b4b4b8"/><rect x="1" y="37" width="4" height="1" fill="#b4b4b8"/><rect x="1" y="41" width="4" height="1" fill="#b4b4b8"/><rect x="1" y="45" width="4" height="1" fill="#b4b4b8"/><rect x="1" y="49" width="4" height="1" fill="#b4b4b8"/><rect x="1" y="53" width="4" height="1" fill="#b4b4b8"/><rect x="1" y="57" width="4" height="1" fill="#b4b4b8"/><rect x="1" y="61" width="4" height="1" fill="#b4b4b8"/><rect x="1" y="65" width="4" height="1" fill="#b4b4b8"/><rect x="1" y="69" width="4" height="1" fill="#b4b4b8"/><rect x="1" y="73" width="4" height="1" fill="#b4b4b8"/><rect x="1" y="77" width="4" height="1" fill="#b4b4b8"/></svg>
<div class="a" style="left:10px;top:772px;width:1px;height:84px;background:#c9c9cc"></div>
<div class="t" style="left:17px;top:783.1px;font-size:15px;letter-spacing:0.66px;color:#333">Projectfrequentie (Hz)</div>
<div class="a" style="left:17px;top:805px;width:90px;height:25px;background:#fff;border:1px solid #c8c8c8;border-radius:4px"></div>
<div class="a" style="left:70px;top:806px;width:36px;height:23px;background:#f2f2f0;border-left:1px solid #d0d0d0;border-radius:0 3px 3px 0"></div>
<div class="t" style="left:26px;top:811px;font-size:14px;color:#333">4410(</div>
<svg style="left:83px;top:815px" width="10" height="6"><path d="M0 0H10L5 5.5Z" fill="#222"/></svg>
<div class="a" style="left:185px;top:780px;width:1px;height:50px;background:#dcdce0"></div>
<div class="t" style="left:192px;top:783.1px;font-size:15px;letter-spacing:0.66px;color:#333">Vangen</div>
<div class="a" style="left:192px;top:805px;width:89px;height:26px;background:#f2f2f0;border:1px solid #c8c8c8;border-radius:4px"></div>
<div class="t" style="left:203px;top:811px;font-size:14px;color:#333">Uit</div>
<svg style="left:259px;top:815px" width="10" height="6"><path d="M0 0H10L5 5.5Z" fill="#222"/></svg>
<div class="a" style="left:287px;top:780px;width:1px;height:50px;background:#dcdce0"></div>
<div class="t" style="left:294px;top:783.1px;font-size:15px;letter-spacing:0.66px;color:#333">Audiopositie</div>
<div class="a" style="left:294px;top:806px;width:144px;height:19px;background:#cbccd4;border-radius:3px"></div>
<div class="a" style="left:316px;top:806px;width:12px;height:19px;background:#b9bac6"></div>
<div class="a" style="left:350px;top:806px;width:14px;height:19px;background:#b9bac6"></div>
<div class="a" style="left:419px;top:806px;width:9px;height:19px;background:#b9bac6"></div>
<div class="t" style="left:297.3px;top:808px;font-size:12.6px;color:#24249a;-webkit-text-stroke:0.3px #24249a">0</div>
<div class="t" style="left:307.3px;top:808px;font-size:12.6px;color:#24249a;-webkit-text-stroke:0.3px #24249a">0</div>
<div class="t" style="left:319.3px;top:808px;font-size:12.6px;color:#24249a;-webkit-text-stroke:0.3px #24249a">u</div>
<div class="t" style="left:330.5px;top:808px;font-size:12.6px;color:#24249a;-webkit-text-stroke:0.3px #24249a">0</div>
<div class="t" style="left:341px;top:808px;font-size:12.6px;color:#24249a;-webkit-text-stroke:0.3px #24249a">1</div>
<div class="t" style="left:352px;top:808px;font-size:12.6px;color:#24249a;-webkit-text-stroke:0.3px #24249a">m</div>
<div class="t" style="left:367px;top:808px;font-size:12.6px;color:#24249a;-webkit-text-stroke:0.3px #24249a">1</div>
<div class="t" style="left:376.3px;top:808px;font-size:12.6px;color:#24249a;-webkit-text-stroke:0.3px #24249a">0</div>
<div class="t" style="left:385.3px;top:808px;font-size:12.6px;color:#24249a;-webkit-text-stroke:0.3px #24249a">.</div>
<div class="t" style="left:389.5px;top:808px;font-size:12.6px;color:#24249a;-webkit-text-stroke:0.3px #24249a">7</div>
<div class="t" style="left:399.7px;top:808px;font-size:12.6px;color:#24249a;-webkit-text-stroke:0.3px #24249a">5</div>
<div class="t" style="left:409.7px;top:808px;font-size:12.6px;color:#24249a;-webkit-text-stroke:0.3px #24249a">3</div>
<div class="t" style="left:420.5px;top:808px;font-size:12.6px;color:#24249a;-webkit-text-stroke:0.3px #24249a">s</div>
<div class="a" style="left:428px;top:806px;width:10px;height:19px;background:#b2b5c4;border-left:1px solid #f4f4f8;border-radius:0 3px 3px 0"></div>
<svg style="left:429px;top:813px" width="9" height="6"><path d="M0 0H7.5L3.75 4Z" fill="#111"/></svg>
<div class="a" style="left:444px;top:780px;width:1px;height:50px;background:#dcdce0"></div>
<div class="a" style="left:451px;top:778px;width:30px;height:25px;background:#f2f2f0;border:1px solid #c8c8c8;border-radius:4px"></div>
<div class="t" style="left:461px;top:784px;font-size:14px;color:#333">Be</div>
<div class="a" style="left:451px;top:806px;width:30px;height:19px;background:#cbccd4;border-radius:3px"></div>
<div class="t" style="left:454.3px;top:808px;font-size:12.6px;color:#24249a;-webkit-text-stroke:0.3px #24249a">0</div>
<div class="t" style="left:464.3px;top:808px;font-size:12.6px;color:#24249a;-webkit-text-stroke:0.3px #24249a">0</div>
<div class="a" style="left:0px;top:856px;width:1280px;height:1px;background:#bdbdbd"></div>
<div class="a" style="left:0px;top:857px;width:1280px;height:1px;background:#efefef"></div>
<div class="a" style="left:474px;top:52px;width:298px;height:805px;background:#fff;border-right:1px solid rgba(0,0,0,0.32);border-bottom:1px solid rgba(0,0,0,0.25);border-left:1px solid rgba(0,0,0,0.25)"></div>
<div class="t" style="left:504px;top:62.66px;font-size:13.4px;color:#333">Plugins toevoegen/verwijderen...</div>
<div class="a" style="left:476px;top:84px;width:295px;height:1px;background:#dcdcdc"></div>
<div class="t" style="left:504px;top:93.66px;font-size:13.4px;color:#a8a8a8">Laatste effect herhalen</div>
<div class="t" style="left:700px;top:93.66px;width:64px;text-align:right;font-size:13.4px;color:#b4b4b4">Ctrl+R</div>
<div class="a" style="left:476px;top:115px;width:295px;height:1px;background:#dcdcdc"></div>
<div class="t" style="left:504px;top:124.66px;font-size:13.4px;color:#333">Automatisch dempen...</div>
<div class="t" style="left:504px;top:150.66px;font-size:13.4px;color:#333">Bass en treble...</div>
<div class="t" style="left:504px;top:176.66px;font-size:13.4px;color:#333">Compressor...</div>
<div class="t" style="left:504px;top:202.66px;font-size:13.4px;color:#333">Echo...</div>
<div class="t" style="left:504px;top:228.66px;font-size:13.4px;color:#333">Fade-in</div>
<div class="a" style="left:476px;top:248px;width:295px;height:26px;background:#8fb16f"></div>
<div class="t" style="left:504px;top:254.66px;font-size:13.4px;color:#f1f6e2">Fade-out</div>
<div class="t" style="left:504px;top:280.66px;font-size:13.4px;color:#333">Filtercurve...</div>
<div class="t" style="left:504px;top:306.66px;font-size:13.4px;color:#333">Galm...</div>
<div class="t" style="left:504px;top:332.66px;font-size:13.4px;color:#333">Glijdend uitrekken...</div>
<div class="t" style="left:504px;top:358.66px;font-size:13.4px;color:#333">Grafische EQ...</div>
<div class="t" style="left:504px;top:384.66px;font-size:13.4px;color:#333">Herhalen...</div>
<div class="t" style="left:504px;top:410.66px;font-size:13.4px;color:#333">Inverteren</div>
<div class="t" style="left:504px;top:436.66px;font-size:13.4px;color:#333">Klik-verwijdering...</div>
<div class="t" style="left:504px;top:462.66px;font-size:13.4px;color:#333">Normaliseren...</div>
<div class="t" style="left:504px;top:488.66px;font-size:13.4px;color:#333">Omkeren</div>
<div class="t" style="left:504px;top:514.66px;font-size:13.4px;color:#333">Paulstretch...</div>
<div class="t" style="left:504px;top:540.66px;font-size:13.4px;color:#333">Phaser...</div>
<div class="t" style="left:504px;top:566.66px;font-size:13.4px;color:#333">Repareren</div>
<div class="t" style="left:504px;top:592.66px;font-size:13.4px;color:#333">Ruisonderdrukking...</div>
<div class="t" style="left:504px;top:618.66px;font-size:13.4px;color:#333">Snelheid wijzigen...</div>
<div class="t" style="left:504px;top:644.66px;font-size:13.4px;color:#333">Stilte afkappen...</div>
<div class="t" style="left:504px;top:670.66px;font-size:13.4px;color:#333">Tempo wijzigen...</div>
<div class="t" style="left:504px;top:696.66px;font-size:13.4px;color:#333">Toonhoogte wijzigen...</div>
<div class="t" style="left:504px;top:722.66px;font-size:13.4px;color:#333">Versterken...</div>
<div class="t" style="left:504px;top:748.66px;font-size:13.4px;color:#333">Vervorming...</div>
<div class="t" style="left:504px;top:774.66px;font-size:13.4px;color:#333">Wahwah...</div>
<div class="a" style="left:476px;top:796px;width:295px;height:1px;background:#dcdcdc"></div>
<div class="t" style="left:504px;top:805.66px;font-size:13.4px;color:#333">Plug-in 1 tot 15</div>
<div class="t" style="left:504px;top:831.66px;font-size:13.4px;color:#333">Plug-in 16 tot 16</div>
<svg style="left:756px;top:807px" width="6" height="10"><path d="M0 0L5.5 4.75L0 9.5Z" fill="#222"/></svg>
<svg style="left:756px;top:833px" width="6" height="10"><path d="M0 0L5.5 4.75L0 9.5Z" fill="#222"/></svg></body></html>
